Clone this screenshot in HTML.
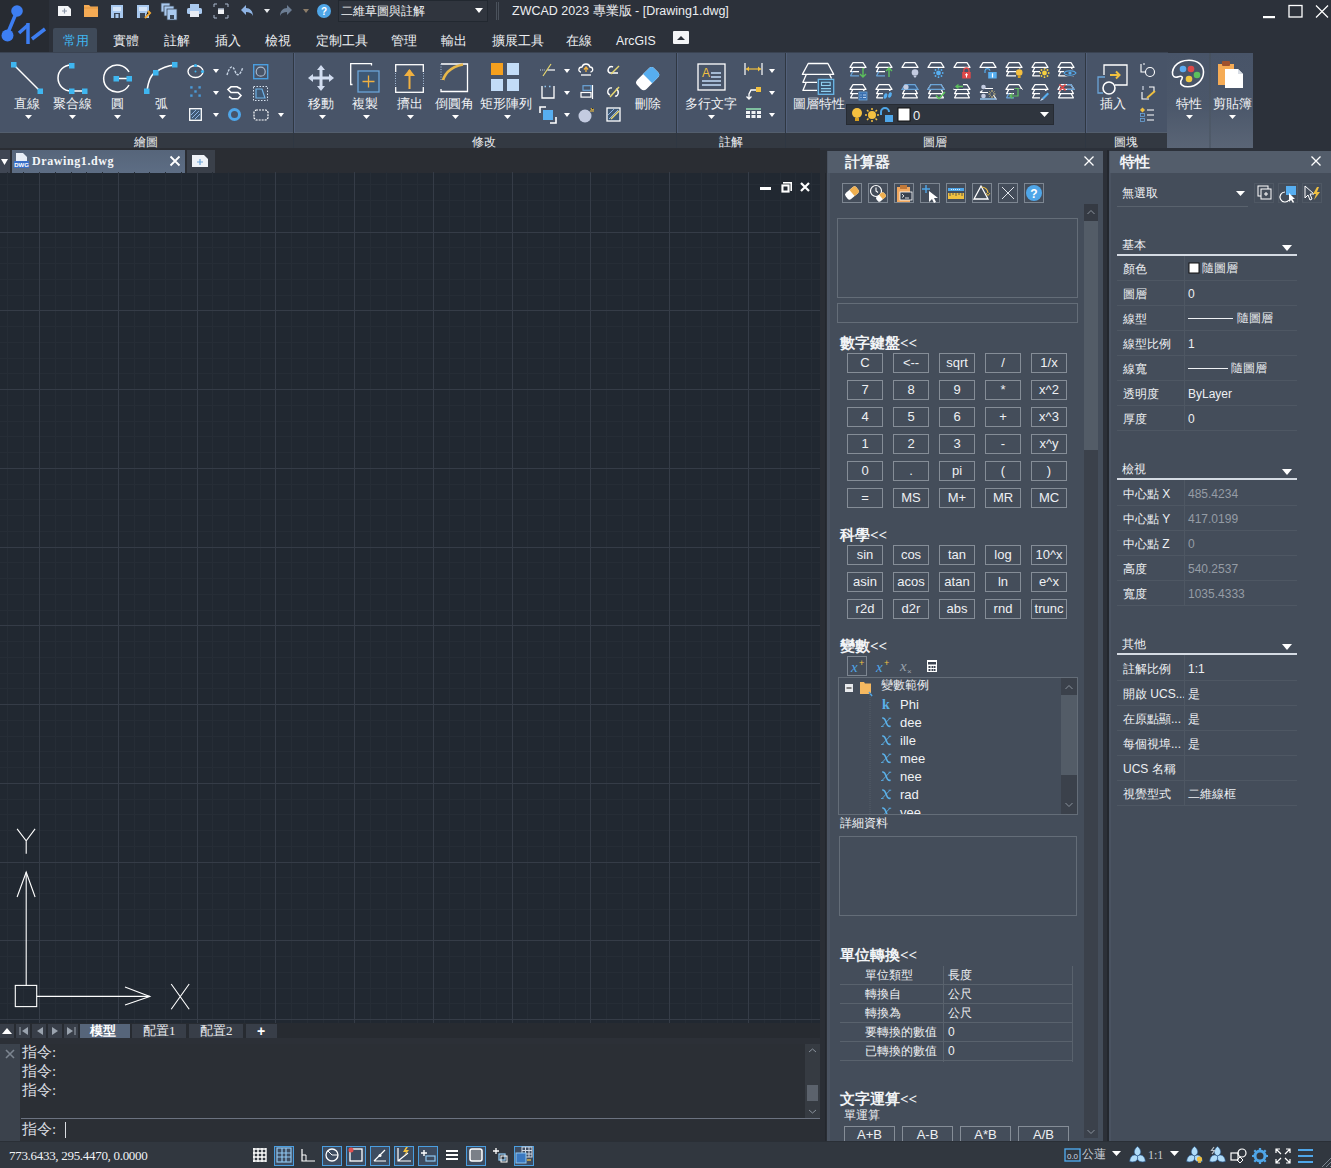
<!DOCTYPE html><html><head><meta charset="utf-8"><style>
html,body{margin:0;padding:0;}
body{width:1331px;height:1168px;position:relative;overflow:hidden;background:#2c313a;font-family:"Liberation Sans",sans-serif;}
.t{position:absolute;white-space:nowrap;line-height:1;font-weight:500;}
.b{position:absolute;box-sizing:border-box;}
.s{position:absolute;overflow:visible;}
</style></head><body>
<div class="b" style="left:0px;top:0px;width:1331px;height:53px;background:#2c313a;"></div>
<div class="b" style="left:0px;top:0px;width:49px;height:53px;background:#272b32;"></div>
<svg class="s" style="left:0px;top:0px;" width="49" height="50" viewBox="0 0 49 50"><line x1="17" y1="11" x2="7" y2="35" stroke="#3d7ef2" stroke-width="3.5"/><circle cx="17" cy="11" r="5.8" fill="#3d7ef2"/><circle cx="7.5" cy="35.5" r="6" fill="#3d7ef2"/><path d="M19 33 L28 25" stroke="#3d7ef2" stroke-width="3.5"/><path d="M28 23 L28 44" stroke="#3d7ef2" stroke-width="3.5"/><path d="M32 39 L45 29" stroke="#3d7ef2" stroke-width="3.5"/></svg>
<svg class="s" style="left:57px;top:5px;" width="15" height="12" viewBox="0 0 15 12"><path d="M1 1H11L14 4V11H1Z" fill="#f4f6f8"/><path d="M5 6H10M7.5 3.5V8.5" stroke="#8a96a8" stroke-width="1.2"/></svg>
<svg class="s" style="left:84px;top:5px;" width="14" height="12" viewBox="0 0 14 12"><path d="M0 0H5L6.5 1.5H14V12H0Z" fill="#f5ab55"/><path d="M0 3H14" stroke="#d98a30" stroke-width="0.6"/></svg>
<svg class="s" style="left:111px;top:5px;" width="12" height="13" viewBox="0 0 12 13"><rect x="0" y="0" width="12" height="13" fill="#a9c9ef"/><rect x="2" y="2" width="8" height="4" fill="#d7e6f8"/><rect x="3" y="8" width="6" height="5" fill="#3a4656"/><rect x="4.5" y="9" width="3" height="4" fill="#a9c9ef"/></svg>
<svg class="s" style="left:137px;top:5px;" width="13" height="13" viewBox="0 0 13 13"><rect x="0" y="0" width="12" height="13" fill="#a9c9ef"/><rect x="2" y="2" width="8" height="4" fill="#d7e6f8"/><rect x="3" y="8" width="5" height="5" fill="#3a4656"/><path d="M8 13L13 8L11 6" stroke="#f0a835" stroke-width="2"/></svg>
<svg class="s" style="left:161px;top:3px;" width="17" height="17" viewBox="0 0 17 17"><rect x="0" y="0" width="9" height="9" fill="#a9c9ef" stroke="#3a4656" stroke-width="0.8"/><rect x="3" y="3" width="10" height="10" fill="#a9c9ef" stroke="#3a4656" stroke-width="0.8"/><rect x="6" y="6" width="10" height="11" fill="#a9c9ef" stroke="#3a4656" stroke-width="0.8"/><rect x="9" y="12" width="4" height="4" fill="#3a4656"/></svg>
<svg class="s" style="left:187px;top:4px;" width="15" height="13" viewBox="0 0 15 13"><rect x="3" y="0" width="9" height="4" fill="#a9c9ef"/><rect x="0" y="4" width="15" height="6" rx="1.5" fill="#a9c9ef"/><rect x="3" y="7" width="9" height="6" fill="#e8ecf4"/></svg>
<svg class="s" style="left:214px;top:4px;" width="14" height="14" viewBox="0 0 14 14"><path d="M0 3V0H3M11 0H14V3M14 11V14H11M3 14H0V11" stroke="#a9b8cc" stroke-width="1" fill="none"/><rect x="4" y="4" width="6" height="6" fill="#f0f2f5"/><rect x="4" y="4" width="6" height="1.5" fill="#8a96a8"/></svg>
<svg class="s" style="left:240px;top:4px;" width="14" height="13" viewBox="0 0 14 13"><path d="M6 1L1 6L6 11V8C9 8 12 9 13 12C13 7 10 4 6 4Z" fill="#8fb4e4"/></svg>
<svg class="s" style="left:263.5px;top:9.0px;" width="6" height="4" viewBox="0 0 6 4"><path d="M0 0H6L3.0 4Z" fill="#e8eaed"/></svg>
<svg class="s" style="left:279px;top:4px;" width="14" height="13" viewBox="0 0 14 13"><path d="M8 1L13 6L8 11V8C5 8 2 9 1 12C1 7 4 4 8 4Z" fill="#6c7d93"/></svg>
<svg class="s" style="left:302.5px;top:9.0px;" width="6" height="4" viewBox="0 0 6 4"><path d="M0 0H6L3.0 4Z" fill="#8d7d6a"/></svg>
<svg class="s" style="left:317px;top:4px;" width="14" height="14" viewBox="0 0 14 14"><circle cx="7" cy="7" r="7" fill="#4fa6e8"/><text x="7" y="11" font-size="10" text-anchor="middle" fill="#fff" font-family="Liberation Sans" font-weight="bold">?</text></svg>
<div class="b" style="left:338px;top:0px;width:150px;height:22px;background:#30353e;border:1px solid #222830;"></div>
<div class="t" style="left:341px;top:5px;font-size:12px;color:#f2f3f5;">二維草圖與註解</div>
<svg class="s" style="left:474.5px;top:8.0px;" width="8" height="5" viewBox="0 0 8 5"><path d="M0 0H8L4.0 5Z" fill="#ffffff"/></svg>
<div class="b" style="left:496px;top:2px;width:1px;height:18px;background:#4b525c;"></div>
<div class="b" style="left:498px;top:2px;width:1px;height:18px;background:#4b525c;"></div>
<div class="t" style="left:512px;top:5px;font-size:12.5px;color:#eceef1;">ZWCAD 2023 專業版 - [Drawing1.dwg]</div>
<svg class="s" style="left:1262px;top:4px;" width="68" height="16" viewBox="0 0 68 16"><rect x="1" y="12" width="12" height="2.2" fill="#fff"/><rect x="27" y="1.5" width="13" height="11.5" stroke="#fff" stroke-width="1.3" fill="none"/><path d="M54 1.5L66 13.5M66 1.5L54 13.5" stroke="#fff" stroke-width="1.2"/></svg>
<div class="b" style="left:53px;top:28px;width:44px;height:24px;background:#3f4a59;border-radius:2px 2px 0 0;"></div>
<div class="t" style="left:616px;top:35px;font-size:12.3px;color:#eef0f3;">ArcGIS</div>
<div class="t" style="left:63px;top:34px;font-size:13px;color:#3fb6f0;">常用</div>
<div class="t" style="left:113px;top:34px;font-size:13px;color:#eef0f3;">實體</div>
<div class="t" style="left:164px;top:34px;font-size:13px;color:#eef0f3;">註解</div>
<div class="t" style="left:215px;top:34px;font-size:13px;color:#eef0f3;">插入</div>
<div class="t" style="left:265px;top:34px;font-size:13px;color:#eef0f3;">檢視</div>
<div class="t" style="left:316px;top:34px;font-size:13px;color:#eef0f3;">定制工具</div>
<div class="t" style="left:391px;top:34px;font-size:13px;color:#eef0f3;">管理</div>
<div class="t" style="left:441px;top:34px;font-size:13px;color:#eef0f3;">輸出</div>
<div class="t" style="left:492px;top:34px;font-size:13px;color:#eef0f3;">擴展工具</div>
<div class="t" style="left:566px;top:34px;font-size:13px;color:#eef0f3;">在線</div>
<svg class="s" style="left:673px;top:31px;" width="16" height="13" viewBox="0 0 16 13"><rect x="0" y="0" width="16" height="13" rx="1" fill="#f4f5f7"/><path d="M4 9L8 5L12 9Z" fill="#2c313a"/></svg>
<div class="b" style="left:0px;top:53px;width:1168px;height:80px;background:#485468;"></div>
<div class="b" style="left:0px;top:52px;width:1168px;height:1px;background:#3a4352;"></div>
<div class="b" style="left:0px;top:133px;width:1168px;height:15px;background:#333942;"></div>
<div class="b" style="left:0px;top:132px;width:1168px;height:1px;background:#535e6d;"></div>
<div class="b" style="left:293px;top:53px;width:1px;height:95px;background:#2f3742;"></div>
<div class="b" style="left:294px;top:53px;width:1px;height:80px;background:#52607a;"></div>
<div class="b" style="left:676px;top:53px;width:1px;height:95px;background:#2f3742;"></div>
<div class="b" style="left:677px;top:53px;width:1px;height:80px;background:#52607a;"></div>
<div class="b" style="left:785px;top:53px;width:1px;height:95px;background:#2f3742;"></div>
<div class="b" style="left:786px;top:53px;width:1px;height:80px;background:#52607a;"></div>
<div class="b" style="left:1085px;top:53px;width:1px;height:95px;background:#2f3742;"></div>
<div class="b" style="left:1086px;top:53px;width:1px;height:80px;background:#52607a;"></div>
<div class="b" style="left:1167px;top:53px;width:86px;height:95px;background:linear-gradient(180deg,#485468 0%,#4b576a 55%,#5a6576 100%);"></div>
<div class="b" style="left:1209px;top:53px;width:2px;height:95px;background:linear-gradient(#46515f,#505b6a);"></div>
<div class="t" style="left:46px;width:200px;text-align:center;top:136px;font-size:12px;color:#eef0f3;">繪圖</div>
<div class="t" style="left:384px;width:200px;text-align:center;top:136px;font-size:12px;color:#eef0f3;">修改</div>
<div class="t" style="left:631px;width:200px;text-align:center;top:136px;font-size:12px;color:#eef0f3;">註解</div>
<div class="t" style="left:835px;width:200px;text-align:center;top:136px;font-size:12px;color:#eef0f3;">圖層</div>
<div class="t" style="left:1026px;width:200px;text-align:center;top:136px;font-size:12px;color:#eef0f3;">圖塊</div>
<div class="t" style="left:-73px;width:200px;text-align:center;top:97px;font-size:13px;color:#f0f2f5;">直線</div>
<div class="t" style="left:-28px;width:200px;text-align:center;top:97px;font-size:13px;color:#f0f2f5;">聚合線</div>
<div class="t" style="left:17px;width:200px;text-align:center;top:97px;font-size:13px;color:#f0f2f5;">圓</div>
<div class="t" style="left:61px;width:200px;text-align:center;top:97px;font-size:13px;color:#f0f2f5;">弧</div>
<div class="t" style="left:221px;width:200px;text-align:center;top:97px;font-size:13px;color:#f0f2f5;">移動</div>
<div class="t" style="left:265px;width:200px;text-align:center;top:97px;font-size:13px;color:#f0f2f5;">複製</div>
<div class="t" style="left:310px;width:200px;text-align:center;top:97px;font-size:13px;color:#f0f2f5;">擠出</div>
<div class="t" style="left:354px;width:200px;text-align:center;top:97px;font-size:13px;color:#f0f2f5;">倒圓角</div>
<div class="t" style="left:406px;width:200px;text-align:center;top:97px;font-size:13px;color:#f0f2f5;">矩形陣列</div>
<div class="t" style="left:548px;width:200px;text-align:center;top:97px;font-size:13px;color:#f0f2f5;">刪除</div>
<div class="t" style="left:611px;width:200px;text-align:center;top:97px;font-size:13px;color:#f0f2f5;">多行文字</div>
<div class="t" style="left:719px;width:200px;text-align:center;top:97px;font-size:13px;color:#f0f2f5;">圖層特性</div>
<div class="t" style="left:1013px;width:200px;text-align:center;top:97px;font-size:13px;color:#f0f2f5;">插入</div>
<div class="t" style="left:1089px;width:200px;text-align:center;top:97px;font-size:13px;color:#f0f2f5;">特性</div>
<div class="t" style="left:1132px;width:200px;text-align:center;top:97px;font-size:13px;color:#f0f2f5;">剪貼簿</div>
<svg class="s" style="left:24.5px;top:115.0px;" width="7" height="4" viewBox="0 0 7 4"><path d="M0 0H7L3.5 4Z" fill="#ffffff"/></svg>
<svg class="s" style="left:68.5px;top:115.0px;" width="7" height="4" viewBox="0 0 7 4"><path d="M0 0H7L3.5 4Z" fill="#ffffff"/></svg>
<svg class="s" style="left:113.5px;top:115.0px;" width="7" height="4" viewBox="0 0 7 4"><path d="M0 0H7L3.5 4Z" fill="#ffffff"/></svg>
<svg class="s" style="left:158.5px;top:115.0px;" width="7" height="4" viewBox="0 0 7 4"><path d="M0 0H7L3.5 4Z" fill="#ffffff"/></svg>
<svg class="s" style="left:318.5px;top:115.0px;" width="7" height="4" viewBox="0 0 7 4"><path d="M0 0H7L3.5 4Z" fill="#ffffff"/></svg>
<svg class="s" style="left:362.5px;top:115.0px;" width="7" height="4" viewBox="0 0 7 4"><path d="M0 0H7L3.5 4Z" fill="#ffffff"/></svg>
<svg class="s" style="left:406.5px;top:115.0px;" width="7" height="4" viewBox="0 0 7 4"><path d="M0 0H7L3.5 4Z" fill="#ffffff"/></svg>
<svg class="s" style="left:451.5px;top:115.0px;" width="7" height="4" viewBox="0 0 7 4"><path d="M0 0H7L3.5 4Z" fill="#ffffff"/></svg>
<svg class="s" style="left:503.5px;top:115.0px;" width="7" height="4" viewBox="0 0 7 4"><path d="M0 0H7L3.5 4Z" fill="#ffffff"/></svg>
<svg class="s" style="left:707.5px;top:115.0px;" width="7" height="4" viewBox="0 0 7 4"><path d="M0 0H7L3.5 4Z" fill="#ffffff"/></svg>
<svg class="s" style="left:1185.5px;top:115.0px;" width="7" height="4" viewBox="0 0 7 4"><path d="M0 0H7L3.5 4Z" fill="#ffffff"/></svg>
<svg class="s" style="left:1228.5px;top:115.0px;" width="7" height="4" viewBox="0 0 7 4"><path d="M0 0H7L3.5 4Z" fill="#ffffff"/></svg>
<svg class="s" style="left:8px;top:58px;" width="38" height="38" viewBox="0 0 38 38"><line x1="6" y1="7" x2="32" y2="33" stroke="#fff" stroke-width="1.5"/><rect x="3" y="4" width="5.5" height="5.5" fill="#3fb6f0"/><rect x="29.5" y="30.5" width="5.5" height="5.5" fill="#3fb6f0"/></svg>
<svg class="s" style="left:54px;top:57.5px;" width="38" height="38" viewBox="0 0 38 38"><path d="M17 7 A13 13 0 0 0 17 33 H30" stroke="#fff" stroke-width="1.5" fill="none"/><rect x="15" y="5" width="5.5" height="5.5" fill="#3fb6f0"/><rect x="15" y="30.5" width="5.5" height="5.5" fill="#3fb6f0"/><rect x="28" y="30.5" width="5.5" height="5.5" fill="#3fb6f0"/></svg>
<svg class="s" style="left:97.5px;top:57.5px;" width="38" height="38" viewBox="0 0 38 38"><path d="M31 14 A13.5 13.5 0 1 0 31 27" stroke="#fff" stroke-width="1.5" fill="none"/><line x1="18" y1="20.5" x2="31" y2="20.5" stroke="#fff" stroke-width="1.5"/><rect x="15.5" y="18" width="5.5" height="5.5" fill="#3fb6f0"/><rect x="28.5" y="18" width="5.5" height="5.5" fill="#3fb6f0"/></svg>
<svg class="s" style="left:142px;top:59px;" width="38" height="38" viewBox="0 0 38 38"><path d="M5 32 Q7 16 14 13 Q22 7 33 6" stroke="#fff" stroke-width="1.5" fill="none"/><rect x="2" y="29.5" width="5.5" height="5.5" fill="#3fb6f0"/><rect x="11" y="11" width="5.5" height="5.5" fill="#3fb6f0"/><rect x="30" y="3" width="5.5" height="5.5" fill="#3fb6f0"/></svg>
<svg class="s" style="left:187px;top:64px;" width="18" height="16" viewBox="0 0 18 16"><ellipse cx="8.5" cy="7.5" rx="7.5" ry="6" stroke="#fff" stroke-width="1.4" fill="none"/><circle cx="8.5" cy="1.5" r="1.6" fill="#3fb6f0"/><circle cx="15.5" cy="7.5" r="1.6" fill="#3fb6f0"/><circle cx="8.5" cy="7.5" r="1" fill="#3fb6f0"/></svg>
<svg class="s" style="left:212.5px;top:69.0px;" width="6" height="4" viewBox="0 0 6 4"><path d="M0 0H6L3.0 4Z" fill="#ffffff"/></svg>
<svg class="s" style="left:226px;top:64px;" width="18" height="14" viewBox="0 0 18 14"><path d="M1 11 C4 1 7 1 9 7 C11 13 14 12 17 3" stroke="#c9d6e6" stroke-width="1.4" fill="none" stroke-dasharray="2.5 1.2"/></svg>
<svg class="s" style="left:253px;top:64px;" width="16" height="16" viewBox="0 0 16 16"><rect x="0.7" y="0.7" width="14" height="14" stroke="#4a9ee0" stroke-width="1.4" fill="none"/><circle cx="7.7" cy="7.7" r="4.5" stroke="#a9b8cc" stroke-width="1.2" fill="none"/></svg>
<svg class="s" style="left:190px;top:86px;" width="11" height="11" viewBox="0 0 11 11"><g fill="#4a9ad8"><rect x="0.2" y="0.2" width="2.4" height="2.4"/><rect x="8.4" y="0.2" width="2.4" height="2.4"/><rect x="4.3" y="4.3" width="2.4" height="2.4"/><rect x="0.2" y="8.4" width="2.4" height="2.4"/><rect x="8.4" y="8.4" width="2.4" height="2.4"/></g></svg>
<svg class="s" style="left:212.5px;top:91.0px;" width="6" height="4" viewBox="0 0 6 4"><path d="M0 0H6L3.0 4Z" fill="#ffffff"/></svg>
<svg class="s" style="left:227px;top:86px;" width="16" height="14" viewBox="0 0 16 14"><path d="M14 3 L10 0.8 H4 L1 3.5 L4 6.5 H11 L14 9.5 L11 12.8 H5 L2 10.5" stroke="#fff" stroke-width="1.6" fill="none"/></svg>
<svg class="s" style="left:253px;top:86px;" width="16" height="15" viewBox="0 0 16 15"><rect x="0.5" y="0.5" width="14" height="14" stroke="#d7e3f0" stroke-width="1" stroke-dasharray="1.5 1.5" fill="none"/><path d="M3 3H9L12 12H3Z" stroke="#6fb3e8" stroke-width="1.2" fill="#3e5874"/></svg>
<svg class="s" style="left:189px;top:108px;" width="13" height="13" viewBox="0 0 13 13"><rect x="0.7" y="0.7" width="11.6" height="11.6" stroke="#fff" stroke-width="1.3" fill="#3e5874"/><path d="M3 10L10 3M6 11L11 6M2 7L7 2" stroke="#8fb4e4" stroke-width="1"/></svg>
<svg class="s" style="left:212.5px;top:113.0px;" width="6" height="4" viewBox="0 0 6 4"><path d="M0 0H6L3.0 4Z" fill="#ffffff"/></svg>
<svg class="s" style="left:228px;top:108px;" width="13" height="13" viewBox="0 0 13 13"><circle cx="6.5" cy="6.5" r="5" stroke="#4fa6e8" stroke-width="3" fill="none"/></svg>
<svg class="s" style="left:253px;top:109px;" width="16" height="12" viewBox="0 0 16 12"><path d="M3 1H13L15 3V9L13 11H3L1 9V3Z" stroke="#fff" stroke-width="1.2" fill="none" stroke-dasharray="2 1"/></svg>
<svg class="s" style="left:278.0px;top:113.0px;" width="6" height="4" viewBox="0 0 6 4"><path d="M0 0H6L3.0 4Z" fill="#ffffff"/></svg>
<svg class="s" style="left:307px;top:64px;" width="28" height="28" viewBox="0 0 28 28"><path d="M14 1L18 6H15.5V12.5H22V10L27 14L22 18V15.5H15.5V22H18L14 27L10 22H12.5V15.5H6V18L1 14L6 10V12.5H12.5V6H10Z" fill="#d2ddf0"/></svg>
<svg class="s" style="left:350px;top:63px;" width="30" height="30" viewBox="0 0 30 30"><path d="M21.5 2.5V0.7H0.7V21.5H2.5" stroke="#fff" stroke-width="1.3" fill="none"/><rect x="8" y="8" width="21" height="21" stroke="#6aa4d8" stroke-width="1.3" fill="#3e5874"/><path d="M18.5 12.5V24.5M12.5 18.5H24.5" stroke="#f0b040" stroke-width="1.3"/></svg>
<svg class="s" style="left:395px;top:64px;" width="29" height="29" viewBox="0 0 29 29"><rect x="0.7" y="0.7" width="27.6" height="27.6" stroke="#fff" stroke-width="1.3" fill="none"/><path d="M14.5 6V25" stroke="#f0b040" stroke-width="2"/><path d="M9 12L14.5 5L20 12Z" fill="#f0b040"/></svg>
<div class="b" style="left:394px;top:72px;width:3px;height:15px;background:#485468;"></div>
<div class="b" style="left:422px;top:72px;width:3px;height:15px;background:#485468;"></div>
<svg class="s" style="left:394px;top:72px;" width="31" height="15" viewBox="0 0 31 15"><path d="M1.5 1V14M29.5 1V14" stroke="#a9c0dc" stroke-width="1" stroke-dasharray="1 1.5"/></svg>
<svg class="s" style="left:439px;top:63px;" width="30" height="30" viewBox="0 0 30 30"><path d="M2 1H28.5V28.5H2V26" stroke="#fff" stroke-width="1.3" fill="none"/><path d="M2 1V22" stroke="#a9c0dc" stroke-width="1" stroke-dasharray="1 1.5"/><path d="M2.5 23 Q5 5 24 1.5" stroke="#e8b84a" stroke-width="2.6" fill="none"/></svg>
<div class="b" style="left:440px;top:80px;width:4px;height:8px;background:#485468;"></div>
<svg class="s" style="left:491px;top:63px;" width="30" height="30" viewBox="0 0 30 30"><rect x="0" y="0" width="12" height="12" fill="#f5a01e"/><rect x="16" y="0" width="12" height="12" fill="#c3dcf7"/><rect x="0" y="16" width="12" height="12" fill="#c3dcf7"/><rect x="16" y="16" width="12" height="12" fill="#c3dcf7"/></svg>
<svg class="s" style="left:539px;top:63px;" width="22" height="14" viewBox="0 0 22 14"><path d="M1 7H6M8 7H9" stroke="#c9d6e6" stroke-width="1" stroke-dasharray="1 1.2"/><path d="M9 7H16" stroke="#fff" stroke-width="1.2"/><path d="M4 13L12 1" stroke="#e8d870" stroke-width="1.2"/></svg>
<svg class="s" style="left:564.0px;top:69.0px;" width="6" height="4" viewBox="0 0 6 4"><path d="M0 0H6L3.0 4Z" fill="#ffffff"/></svg>
<svg class="s" style="left:541px;top:85px;" width="14" height="14" viewBox="0 0 14 14"><path d="M1 1V13H13V1" stroke="#fff" stroke-width="1.3" fill="none"/><path d="M3.5 1.5H5M8 1.5H9.5" stroke="#8fc6f0" stroke-width="1.4"/></svg>
<svg class="s" style="left:564.0px;top:91.0px;" width="6" height="4" viewBox="0 0 6 4"><path d="M0 0H6L3.0 4Z" fill="#ffffff"/></svg>
<svg class="s" style="left:539px;top:106px;" width="18" height="18" viewBox="0 0 18 18"><path d="M1 7V1H7M11 17H17V11" stroke="#fff" stroke-width="1.6" fill="none"/><rect x="4" y="4" width="10" height="10" fill="#57aef0"/></svg>
<svg class="s" style="left:564.0px;top:113.0px;" width="6" height="4" viewBox="0 0 6 4"><path d="M0 0H6L3.0 4Z" fill="#ffffff"/></svg>
<svg class="s" style="left:578px;top:63px;" width="16" height="15" viewBox="0 0 16 15"><path d="M3 9C0 9 0 4 4 4C5 0 11 0 12 4C15.5 4 15.5 9 12.5 9" stroke="#fff" stroke-width="1.3" fill="none"/><path d="M3 12H13" stroke="#fff" stroke-width="1.3"/><path d="M8 4V9M6 6.5L8 4L10 6.5" stroke="#f0b040" stroke-width="1.3" fill="none"/></svg>
<svg class="s" style="left:580px;top:85px;" width="13" height="14" viewBox="0 0 13 14"><rect x="3" y="0.7" width="8" height="4.6" stroke="#6aa4d8" stroke-width="1.2" fill="none"/><rect x="1" y="7.5" width="10" height="4.6" stroke="#fff" stroke-width="1.2" fill="none"/><path d="M12.5 0V14" stroke="#fff" stroke-width="1.2"/></svg>
<svg class="s" style="left:578px;top:107px;" width="17" height="15" viewBox="0 0 17 15"><circle cx="7" cy="9" r="6.5" fill="#c3cbe0"/><path d="M13 1L14 3L16 2M12 4H16" stroke="#f0c040" stroke-width="1"/></svg>
<svg class="s" style="left:606px;top:64px;" width="16" height="14" viewBox="0 0 16 14"><path d="M7 3C3 1 0 7 4 9H12" stroke="#fff" stroke-width="1.4" fill="none"/><path d="M5 10L13 2" stroke="#e8d870" stroke-width="1.5"/></svg>
<svg class="s" style="left:606px;top:85px;" width="16" height="14" viewBox="0 0 16 14"><path d="M6 3C2 2 0 8 4 10" stroke="#fff" stroke-width="1.4" fill="none"/><path d="M10 4C14 6 12 12 9 11" stroke="#fff" stroke-width="1.4" fill="none"/><path d="M4 12L13 2" stroke="#e8d870" stroke-width="1.5"/></svg>
<svg class="s" style="left:606px;top:107px;" width="15" height="15" viewBox="0 0 15 15"><rect x="1" y="1" width="13" height="13" stroke="#fff" stroke-width="1.3" fill="#3e5874"/><path d="M3 12L12 3M2 8L8 2" stroke="#8fb4e4" stroke-width="1"/><path d="M5 12L13 4" stroke="#e8d870" stroke-width="1.5"/></svg>
<svg class="s" style="left:633px;top:64px;" width="30" height="29" viewBox="0 0 30 29"><g transform="rotate(-45 15 15)"><rect x="3" y="8" width="24" height="13" rx="4" fill="#fff"/><path d="M15 8H23A4 4 0 0 1 27 12V17A4 4 0 0 1 23 21H15Z" fill="#57aef0"/></g></svg>
<svg class="s" style="left:697px;top:63px;" width="29" height="28" viewBox="0 0 29 28"><rect x="1" y="1" width="27" height="26" stroke="#fff" stroke-width="1.3" fill="none"/><text x="5" y="14" font-size="12" fill="#f0c040" font-family="Liberation Sans">A</text><path d="M14 10H24M14 14H24M5 18H24M5 22H24" stroke="#c3dcf7" stroke-width="1.6"/></svg>
<svg class="s" style="left:744px;top:63px;" width="19" height="13" viewBox="0 0 19 13"><path d="M1 0V12M18 0V12" stroke="#fff" stroke-width="1.2"/><path d="M2 6H17" stroke="#f0c040" stroke-width="1.2"/><path d="M2 6L5 3.5V8.5ZM17 6L14 3.5V8.5Z" fill="#f0c040"/></svg>
<svg class="s" style="left:769.0px;top:69.0px;" width="6" height="4" viewBox="0 0 6 4"><path d="M0 0H6L3.0 4Z" fill="#ffffff"/></svg>
<svg class="s" style="left:744px;top:86px;" width="19" height="14" viewBox="0 0 19 14"><rect x="12" y="1" width="5" height="5" fill="#f0c040"/><path d="M12 4H7L5 8V13M2.5 10.5L5 13L7.5 10.5" stroke="#fff" stroke-width="1.3" fill="none"/></svg>
<svg class="s" style="left:769.0px;top:91.0px;" width="6" height="4" viewBox="0 0 6 4"><path d="M0 0H6L3.0 4Z" fill="#ffffff"/></svg>
<svg class="s" style="left:745px;top:108px;" width="17" height="13" viewBox="0 0 17 13"><rect x="1" y="0" width="15" height="2" fill="#7fc0a0"/><g fill="#f0f2f5"><rect x="1" y="3" width="4" height="3"/><rect x="6.5" y="3" width="4" height="3"/><rect x="12" y="3" width="4" height="3"/><rect x="1" y="7" width="4" height="3"/><rect x="6.5" y="7" width="4" height="3"/><rect x="12" y="7" width="4" height="3"/></g></svg>
<svg class="s" style="left:769.0px;top:113.0px;" width="6" height="4" viewBox="0 0 6 4"><path d="M0 0H6L3.0 4Z" fill="#ffffff"/></svg>
<svg class="s" style="left:795px;top:58px;" width="45" height="40" viewBox="0 0 45 40"><g stroke="#fff" stroke-width="1.3" fill="none" stroke-linejoin="round"><path d="M13.2 5.5H32.9L38.7 16.4H7.4Z"/><path d="M11.3 16.4L7.9 24.3H22"/><path d="M11.3 24.3L7.9 32.4H22"/><path d="M34.5 16.4L36.5 20.5"/></g><rect x="23.3" y="21.4" width="15.4" height="14.9" stroke="#6ab8e8" stroke-width="1.3" fill="#3a5470"/><rect x="26.5" y="24.3" width="8.7" height="3.2" stroke="#8fd0f0" stroke-width="1.1" fill="none"/><path d="M26 30.6H36M26 33.4H36" stroke="#8fd0f0" stroke-width="1.1"/></svg>
<svg class="s" style="left:850px;top:62px;" width="18" height="18" viewBox="0 0 18 18"><path d="M3 0.6H13L16 5.4H0L3 0.6Z" stroke="#fff" stroke-width="1.2" fill="none" stroke-linejoin="round"/><path d="M2.8 5.4L0.6 9.6H15.4L13.2 5.4" stroke="#fff" stroke-width="1.2" fill="none" stroke-linejoin="round"/><path d="M2.8 9.6L0.6 13.8H15.4L13.2 9.6" stroke="#6aa4d8" stroke-width="1.2" fill="none" stroke-linejoin="round"/><rect x="9" y="6.5" width="8" height="9" fill="#485468"/><path d="M13 6V15M10 12L13 15L16 12" stroke="#5cc05c" stroke-width="1.4" fill="none"/></svg>
<svg class="s" style="left:876px;top:62px;" width="18" height="18" viewBox="0 0 18 18"><path d="M3 0.6H13L16 5.4H0L3 0.6Z" stroke="#fff" stroke-width="1.2" fill="none" stroke-linejoin="round"/><path d="M2.8 5.4L0.6 9.6H15.4L13.2 5.4" stroke="#fff" stroke-width="1.2" fill="none" stroke-linejoin="round"/><path d="M2.8 9.6L0.6 13.8H15.4L13.2 9.6" stroke="#6aa4d8" stroke-width="1.2" fill="none" stroke-linejoin="round"/><rect x="9" y="6.5" width="8" height="9" fill="#485468"/><path d="M13 15V6M10 9L13 6L16 9" stroke="#5cc05c" stroke-width="1.4" fill="none"/></svg>
<svg class="s" style="left:902px;top:62px;" width="18" height="18" viewBox="0 0 18 18"><path d="M3 0.6H13L16 5.4H0L3 0.6Z" stroke="#fff" stroke-width="1.2" fill="none" stroke-linejoin="round"/><circle cx="13" cy="10.5" r="3.3" fill="#c3cbe0"/><path d="M11.3 14H14.7L13 16Z" fill="#c3cbe0"/></svg>
<svg class="s" style="left:928px;top:62px;" width="18" height="18" viewBox="0 0 18 18"><path d="M3 0.6H13L16 5.4H0L3 0.6Z" stroke="#fff" stroke-width="1.2" fill="none" stroke-linejoin="round"/><circle cx="10.5" cy="11" r="2.4" fill="#57aef0"/><g fill="#57aef0"><circle cx="10.5" cy="6.8" r="0.9"/><circle cx="10.5" cy="15.2" r="0.9"/><circle cx="6.3" cy="11" r="0.9"/><circle cx="14.7" cy="11" r="0.9"/><circle cx="7.5" cy="8" r="0.9"/><circle cx="13.5" cy="14" r="0.9"/><circle cx="7.5" cy="14" r="0.9"/><circle cx="13.5" cy="8" r="0.9"/></g></svg>
<svg class="s" style="left:954px;top:62px;" width="18" height="18" viewBox="0 0 18 18"><path d="M3 0.6H13L16 5.4H0L3 0.6Z" stroke="#fff" stroke-width="1.2" fill="none" stroke-linejoin="round"/><path d="M9.8 10V8.6A2.6 2.6 0 0 1 15 8.6V10" stroke="#e04848" stroke-width="1.3" fill="none"/><rect x="8.2" y="10" width="8.5" height="6.5" fill="#e04848"/><path d="M12.5 11.3V15.5M11 12.8H14" stroke="#fff" stroke-width="1"/></svg>
<svg class="s" style="left:980px;top:62px;" width="18" height="18" viewBox="0 0 18 18"><path d="M3 0.6H13L16 5.4H0L3 0.6Z" stroke="#fff" stroke-width="1.2" fill="none" stroke-linejoin="round"/><path d="M5 11V8.6A2.6 2.6 0 0 1 10 8.6" stroke="#57aef0" stroke-width="1.2" fill="none"/><rect x="8.2" y="10" width="8.5" height="6.5" fill="#57aef0"/><path d="M12.5 11.3V15.5" stroke="#fff" stroke-width="1.2"/></svg>
<svg class="s" style="left:1006px;top:62px;" width="18" height="18" viewBox="0 0 18 18"><path d="M3 0.6H13L16 5.4H0L3 0.6Z" stroke="#fff" stroke-width="1.2" fill="none" stroke-linejoin="round"/><path d="M2.8 5.4L0.6 9.6H15.4L13.2 5.4" stroke="#fff" stroke-width="1.2" fill="none" stroke-linejoin="round"/><path d="M2.8 9.6L0.6 13.8H15.4L13.2 9.6" stroke="#fff" stroke-width="1.2" fill="none" stroke-linejoin="round"/><rect x="10" y="6.5" width="7" height="10" fill="#485468"/><circle cx="13.2" cy="10.5" r="3.3" fill="#f5c040"/><rect x="11.8" y="13.5" width="2.8" height="2.5" fill="#d8a020"/></svg>
<svg class="s" style="left:1032px;top:62px;" width="18" height="18" viewBox="0 0 18 18"><path d="M3 0.6H13L16 5.4H0L3 0.6Z" stroke="#fff" stroke-width="1.2" fill="none" stroke-linejoin="round"/><path d="M2.8 5.4L0.6 9.6H15.4L13.2 5.4" stroke="#fff" stroke-width="1.2" fill="none" stroke-linejoin="round"/><path d="M2.8 9.6L0.6 13.8H15.4L13.2 9.6" stroke="#fff" stroke-width="1.2" fill="none" stroke-linejoin="round"/><rect x="8" y="6.5" width="9" height="10" fill="#485468"/><circle cx="12.5" cy="11" r="2.4" fill="#f5d040"/><g fill="#f5d040"><circle cx="12.5" cy="6.8" r="0.9"/><circle cx="12.5" cy="15.2" r="0.9"/><circle cx="8.3" cy="11" r="0.9"/><circle cx="16.7" cy="11" r="0.9"/><circle cx="9.5" cy="8" r="0.9"/><circle cx="15.5" cy="14" r="0.9"/><circle cx="9.5" cy="14" r="0.9"/><circle cx="15.5" cy="8" r="0.9"/></g></svg>
<svg class="s" style="left:1058px;top:62px;" width="18" height="18" viewBox="0 0 18 18"><path d="M3 0.6H13L16 5.4H0L3 0.6Z" stroke="#fff" stroke-width="1.2" fill="none" stroke-linejoin="round"/><path d="M2.8 5.4L0.6 9.6H15.4L13.2 5.4" stroke="#fff" stroke-width="1.2" fill="none" stroke-linejoin="round"/><path d="M2.8 9.6L0.6 13.8H15.4L13.2 9.6" stroke="#fff" stroke-width="1.2" fill="none" stroke-linejoin="round"/><ellipse cx="12" cy="11" rx="6.5" ry="4" fill="#485468"/><path d="M6 11C8 8 16 8 18 11C16 14 8 14 6 11Z" stroke="#57aef0" stroke-width="1.1" fill="none"/><circle cx="12" cy="11" r="1.6" fill="#57aef0"/></svg>
<svg class="s" style="left:850px;top:84px;" width="18" height="18" viewBox="0 0 18 18"><path d="M3 0.6H13L16 5.4H0L3 0.6Z" stroke="#fff" stroke-width="1.2" fill="none" stroke-linejoin="round"/><path d="M2.8 5.4L0.6 9.6H15.4L13.2 5.4" stroke="#fff" stroke-width="1.2" fill="none" stroke-linejoin="round"/><path d="M2.8 9.6L0.6 13.8H15.4L13.2 9.6" stroke="#fff" stroke-width="1.2" fill="none" stroke-linejoin="round"/><rect x="8" y="7" width="9" height="9" fill="#485468"/><rect x="9" y="8" width="8" height="8" fill="#3a6fb0" stroke="#6aa4d8" stroke-width="0.8"/><path d="M10.5 11H11.5M13 11H16M10.5 13.5H11.5M13 13.5H16" stroke="#c3dcf7" stroke-width="0.9"/></svg>
<svg class="s" style="left:876px;top:84px;" width="18" height="18" viewBox="0 0 18 18"><path d="M3 0.6H13L16 5.4H0L3 0.6Z" stroke="#fff" stroke-width="1.2" fill="none" stroke-linejoin="round"/><path d="M2.8 5.4L0.6 9.6H15.4L13.2 5.4" stroke="#fff" stroke-width="1.2" fill="none" stroke-linejoin="round"/><path d="M2.8 9.6L0.6 13.8H15.4L13.2 9.6" stroke="#fff" stroke-width="1.2" fill="none" stroke-linejoin="round"/><rect x="7" y="7" width="10" height="9" fill="#485468"/><ellipse cx="9.5" cy="12" rx="1.7" ry="2.8" fill="#57aef0" transform="rotate(20 9.5 12)"/><ellipse cx="14" cy="11" rx="1.7" ry="2.8" fill="#57aef0" transform="rotate(20 14 11)"/></svg>
<svg class="s" style="left:902px;top:84px;" width="18" height="18" viewBox="0 0 18 18"><path d="M2.8 5.4L0.6 9.6H15.4L13.2 5.4" stroke="#fff" stroke-width="1.2" fill="none" stroke-linejoin="round"/><path d="M2.8 9.6L0.6 13.8H15.4L13.2 9.6" stroke="#fff" stroke-width="1.2" fill="none" stroke-linejoin="round"/><path d="M3 0.6H13L16 5.4H0Z" stroke="#6aa4d8" stroke-width="1.2" fill="#3a5a80"/><circle cx="4" cy="3" r="2.6" fill="#c3cbe0"/></svg>
<svg class="s" style="left:928px;top:84px;" width="18" height="18" viewBox="0 0 18 18"><path d="M3 0.6H13L16 5.4H0L3 0.6Z" stroke="#fff" stroke-width="1.2" fill="none" stroke-linejoin="round"/><path d="M2.8 5.4L0.6 9.6H15.4L13.2 5.4" stroke="#fff" stroke-width="1.2" fill="none" stroke-linejoin="round"/><path d="M2.8 9.6L0.6 13.8H15.4L13.2 9.6" stroke="#fff" stroke-width="1.2" fill="none" stroke-linejoin="round"/><path d="M3 0.6H13L16 5.4H0Z" stroke="#6aa4d8" stroke-width="1.2" fill="#485468"/><path d="M8 11.5L11 14.5L17 8" stroke="#5cc05c" stroke-width="1.7" fill="none"/></svg>
<svg class="s" style="left:954px;top:84px;" width="18" height="18" viewBox="0 0 18 18"><path d="M3 0.6H13L16 5.4H0L3 0.6Z" stroke="#fff" stroke-width="1.2" fill="none" stroke-linejoin="round"/><path d="M2.8 5.4L0.6 9.6H15.4L13.2 5.4" stroke="#fff" stroke-width="1.2" fill="none" stroke-linejoin="round"/><path d="M2.8 9.6L0.6 13.8H15.4L13.2 9.6" stroke="#fff" stroke-width="1.2" fill="none" stroke-linejoin="round"/><rect x="0" y="0" width="9" height="5" fill="#485468"/><path d="M9 2.5H2M4.5 0.5L2 2.5L4.5 4.5" stroke="#5cc05c" stroke-width="1.3" fill="none"/></svg>
<svg class="s" style="left:980px;top:84px;" width="18" height="18" viewBox="0 0 18 18"><path d="M5 4.5H13M0 8.5H8M2.5 6.5L0 8.5M0 15H16L13.5 11" stroke="#fff" stroke-width="1.2" fill="none"/><path d="M0 15H16" stroke="#6aa4d8" stroke-width="1.2"/><circle cx="3.5" cy="3" r="2.3" fill="#c3cbe0"/><circle cx="3.5" cy="12" r="2.3" fill="#c3cbe0"/><g stroke="#e8d080" stroke-width="0.9"><path d="M12 6V8M12 12V14M8.5 10H10.5M13.5 10H15.5M9.5 7.5L10.5 8.5M13.5 11.5L14.5 12.5M9.5 12.5L10.5 11.5M13.5 8.5L14.5 7.5"/></g></svg>
<svg class="s" style="left:1006px;top:84px;" width="18" height="18" viewBox="0 0 18 18"><path d="M3 0.6H13L16 5.4H0L3 0.6Z" stroke="#fff" stroke-width="1.2" fill="none" stroke-linejoin="round"/><path d="M2.8 5.4L0.6 9.6H15.4L13.2 5.4" stroke="#fff" stroke-width="1.2" fill="none" stroke-linejoin="round"/><path d="M2.8 9.6L0.6 13.8H15.4L13.2 9.6" stroke="#6aa4d8" stroke-width="1.2" fill="none" stroke-linejoin="round"/><rect x="8" y="5" width="8" height="11" fill="#485468"/><path d="M9 4.5H12V12H4M6.5 9.5L4 12L6.5 14.5" stroke="#5cc05c" stroke-width="1.2" fill="none"/></svg>
<svg class="s" style="left:1032px;top:84px;" width="18" height="18" viewBox="0 0 18 18"><path d="M3 0.6H13L16 5.4H0L3 0.6Z" stroke="#fff" stroke-width="1.2" fill="none" stroke-linejoin="round"/><path d="M2.8 5.4L0.6 9.6H15.4L13.2 5.4" stroke="#fff" stroke-width="1.2" fill="none" stroke-linejoin="round"/><path d="M2.8 9.6L0.6 13.8H15.4L13.2 9.6" stroke="#fff" stroke-width="1.2" fill="none" stroke-linejoin="round"/><rect x="8" y="7" width="10" height="10" fill="#485468"/><path d="M10 14L15.5 8.5L17 10L11.5 15.5Z" fill="#57aef0"/><path d="M8 17L10 14L11.5 15.5Z" fill="#c3dcf7"/></svg>
<svg class="s" style="left:1058px;top:84px;" width="18" height="18" viewBox="0 0 18 18"><path d="M3 0.6H13L16 5.4H0L3 0.6Z" stroke="#fff" stroke-width="1.2" fill="none" stroke-linejoin="round"/><path d="M2.8 5.4L0.6 9.6H15.4L13.2 5.4" stroke="#fff" stroke-width="1.2" fill="none" stroke-linejoin="round"/><path d="M2.8 9.6L0.6 13.8H15.4L13.2 9.6" stroke="#fff" stroke-width="1.2" fill="none" stroke-linejoin="round"/><path d="M9 0.6H13L16 5.4H9" stroke="#6aa4d8" stroke-width="1.2" fill="none"/><path d="M1.5 0.5L7.5 6.5M7.5 0.5L1.5 6.5" stroke="#e04848" stroke-width="1.6"/></svg>
<div class="b" style="left:846px;top:104px;width:208px;height:21px;background:#2f353e;border:1px solid #262b33;"></div>
<svg class="s" style="left:850px;top:107px;" width="60" height="16" viewBox="0 0 60 16"><circle cx="7" cy="6" r="5" fill="#f5c040"/><rect x="5" y="11" width="4" height="3" fill="#d8a020"/><circle cx="22" cy="8" r="4" fill="#f5c040"/><g stroke="#f5c040" stroke-width="1.5"><path d="M22 1V3M22 13V15M15 8H17M27 8H29M17 3L18.5 4.5M25.5 11.5L27 13M17 13L18.5 11.5M25.5 4.5L27 3"/></g><path d="M31 8V5A4 4 0 0 1 39 5" stroke="#4fa6e8" stroke-width="2" fill="none"/><rect x="35" y="8" width="8" height="7" fill="#4fa6e8"/><rect x="48" y="1" width="12" height="13" fill="#fff" stroke="#111" stroke-width="1"/></svg>
<div class="t" style="left:913px;top:109px;font-size:13px;color:#f0f2f5;">0</div>
<svg class="s" style="left:1039.5px;top:112.0px;" width="9" height="5" viewBox="0 0 9 5"><path d="M0 0H9L4.5 5Z" fill="#ffffff"/></svg>
<svg class="s" style="left:1097px;top:64px;" width="32" height="31" viewBox="0 0 32 31"><path d="M7 11V1H30V21H18" stroke="#fff" stroke-width="1.3" fill="none"/><path d="M8 13H1V29H6" stroke="#6aa4d8" stroke-width="1.3" fill="none"/><circle cx="12" cy="24" r="6" stroke="#fff" stroke-width="1.6" fill="none"/><path d="M13 11H22M19 7.5L22.5 11L19 14.5" stroke="#f0c040" stroke-width="2" fill="none"/></svg>
<svg class="s" style="left:1140px;top:63px;" width="16" height="15" viewBox="0 0 16 15"><path d="M1 1V9H5" stroke="#fff" stroke-width="1.1" fill="none"/><path d="M3 1H5" stroke="#fff" stroke-width="1.1"/><circle cx="10" cy="9" r="4.5" stroke="#fff" stroke-width="1.1" fill="none"/></svg>
<svg class="s" style="left:1140px;top:85px;" width="16" height="16" viewBox="0 0 16 16"><path d="M2 7V14H9M14 7V2H9" stroke="#fff" stroke-width="1.1" fill="none"/><path d="M3 1V5" stroke="#d0d8e4" stroke-width="1.2"/><path d="M7 13L15 6" stroke="#f0c040" stroke-width="1.8"/></svg>
<svg class="s" style="left:1140px;top:107px;" width="15" height="15" viewBox="0 0 15 15"><path d="M0 3L2.5 0.5L5 3L2.5 5.5Z" fill="#f0c040"/><rect x="0.5" y="6.5" width="4" height="3" stroke="#6aa4d8" stroke-width="0.8" fill="none"/><rect x="0.5" y="11.5" width="4" height="3" stroke="#6aa4d8" stroke-width="0.8" fill="none"/><path d="M7 3H14M7 8H14M7 13H14" stroke="#fff" stroke-width="1.2"/></svg>
<svg class="s" style="left:1171px;top:59px;" width="35" height="31" viewBox="0 0 35 31"><path d="M18 1.2C27 1.2 32.5 6.5 32.5 13C32.5 21 25.5 27.8 17 27.8C11.5 27.8 9 25 9.8 22.2C10.5 19.8 12.5 19 10.8 17.6C8.5 15.8 6 19.8 3 17.6C0.6 15.8 1 11 3.8 7.2C7 3.3 12 1.2 18 1.2Z" stroke="#fff" stroke-width="1.6" fill="#485468"/><circle cx="12" cy="10" r="3.3" fill="#5aaaf0"/><circle cx="20" cy="10" r="3.3" fill="#e04848"/><circle cx="26" cy="16" r="3.3" fill="#5cc05c"/><circle cx="18" cy="20" r="3.3" fill="#f0c840"/></svg>
<svg class="s" style="left:1217px;top:60px;" width="30" height="30" viewBox="0 0 30 30"><rect x="1" y="4" width="16" height="21" fill="#f5ab55"/><rect x="5" y="1" width="8" height="5" rx="1" fill="#a0522d"/><path d="M8 9H21L26 14V28H8Z" fill="#fff"/><path d="M21 9V14H26" fill="#d8dde5"/></svg>
<div class="b" style="left:0px;top:148px;width:820px;height:25px;background:#2a2d33;"></div>
<div class="b" style="left:0px;top:150px;width:10px;height:23px;background:#3f4653;"></div>
<svg class="s" style="left:1.0px;top:158.5px;" width="7" height="6" viewBox="0 0 7 6"><path d="M0 0H7L3.5 6Z" fill="#ffffff"/></svg>
<div class="b" style="left:12px;top:150px;width:173px;height:23px;background:linear-gradient(#56657a,#5d6d84);"></div>
<svg class="s" style="left:14px;top:153px;" width="16" height="16" viewBox="0 0 16 16"><path d="M2 0H9L13 4V8H2Z" fill="#e8eef6"/><rect x="0" y="8" width="15" height="7" fill="#3a6fc8"/><text x="7.5" y="14" font-size="6" text-anchor="middle" fill="#fff" font-family="Liberation Sans" font-weight="bold">DWG</text></svg>
<div class="t" style="left:32px;top:155px;font-size:12px;color:#f4f6f8;font-family:'Liberation Serif',serif;font-weight:bold;letter-spacing:0.6px;">Drawing1.dwg</div>
<svg class="s" style="left:169px;top:155px;" width="12" height="12" viewBox="0 0 12 12"><path d="M1.5 1.5L10.5 10.5M10.5 1.5L1.5 10.5" stroke="#fff" stroke-width="1.8"/></svg>
<div class="b" style="left:187px;top:150px;width:28px;height:23px;background:#3a404a;"></div>
<svg class="s" style="left:191px;top:154px;" width="18" height="14" viewBox="0 0 18 14"><path d="M1 1H13L17 5V13H1Z" fill="#eef2f7"/><path d="M6 8H12M9 5V11" stroke="#6aa4d8" stroke-width="1.2"/></svg>
<div class="b" style="left:0px;top:173px;width:820px;height:850px;background:#212831;"></div>
<svg class="s" style="left:0px;top:172px;" width="820" height="851" viewBox="0 0 820 851"><rect x="7" y="0" width="1" height="851" fill="#262d36"/><rect x="23" y="0" width="1" height="851" fill="#262d36"/><rect x="55" y="0" width="1" height="851" fill="#262d36"/><rect x="71" y="0" width="1" height="851" fill="#262d36"/><rect x="86" y="0" width="1" height="851" fill="#262d36"/><rect x="102" y="0" width="1" height="851" fill="#262d36"/><rect x="134" y="0" width="1" height="851" fill="#262d36"/><rect x="149" y="0" width="1" height="851" fill="#262d36"/><rect x="165" y="0" width="1" height="851" fill="#262d36"/><rect x="181" y="0" width="1" height="851" fill="#262d36"/><rect x="212" y="0" width="1" height="851" fill="#262d36"/><rect x="228" y="0" width="1" height="851" fill="#262d36"/><rect x="244" y="0" width="1" height="851" fill="#262d36"/><rect x="260" y="0" width="1" height="851" fill="#262d36"/><rect x="291" y="0" width="1" height="851" fill="#262d36"/><rect x="307" y="0" width="1" height="851" fill="#262d36"/><rect x="323" y="0" width="1" height="851" fill="#262d36"/><rect x="338" y="0" width="1" height="851" fill="#262d36"/><rect x="370" y="0" width="1" height="851" fill="#262d36"/><rect x="386" y="0" width="1" height="851" fill="#262d36"/><rect x="401" y="0" width="1" height="851" fill="#262d36"/><rect x="417" y="0" width="1" height="851" fill="#262d36"/><rect x="449" y="0" width="1" height="851" fill="#262d36"/><rect x="464" y="0" width="1" height="851" fill="#262d36"/><rect x="480" y="0" width="1" height="851" fill="#262d36"/><rect x="496" y="0" width="1" height="851" fill="#262d36"/><rect x="527" y="0" width="1" height="851" fill="#262d36"/><rect x="543" y="0" width="1" height="851" fill="#262d36"/><rect x="559" y="0" width="1" height="851" fill="#262d36"/><rect x="575" y="0" width="1" height="851" fill="#262d36"/><rect x="606" y="0" width="1" height="851" fill="#262d36"/><rect x="622" y="0" width="1" height="851" fill="#262d36"/><rect x="638" y="0" width="1" height="851" fill="#262d36"/><rect x="653" y="0" width="1" height="851" fill="#262d36"/><rect x="685" y="0" width="1" height="851" fill="#262d36"/><rect x="701" y="0" width="1" height="851" fill="#262d36"/><rect x="717" y="0" width="1" height="851" fill="#262d36"/><rect x="732" y="0" width="1" height="851" fill="#262d36"/><rect x="764" y="0" width="1" height="851" fill="#262d36"/><rect x="780" y="0" width="1" height="851" fill="#262d36"/><rect x="795" y="0" width="1" height="851" fill="#262d36"/><rect x="811" y="0" width="1" height="851" fill="#262d36"/><rect x="0" y="12" width="820" height="1" fill="#262d36"/><rect x="0" y="28" width="820" height="1" fill="#262d36"/><rect x="0" y="44" width="820" height="1" fill="#262d36"/><rect x="0" y="75" width="820" height="1" fill="#262d36"/><rect x="0" y="91" width="820" height="1" fill="#262d36"/><rect x="0" y="107" width="820" height="1" fill="#262d36"/><rect x="0" y="123" width="820" height="1" fill="#262d36"/><rect x="0" y="154" width="820" height="1" fill="#262d36"/><rect x="0" y="170" width="820" height="1" fill="#262d36"/><rect x="0" y="186" width="820" height="1" fill="#262d36"/><rect x="0" y="201" width="820" height="1" fill="#262d36"/><rect x="0" y="233" width="820" height="1" fill="#262d36"/><rect x="0" y="249" width="820" height="1" fill="#262d36"/><rect x="0" y="264" width="820" height="1" fill="#262d36"/><rect x="0" y="280" width="820" height="1" fill="#262d36"/><rect x="0" y="312" width="820" height="1" fill="#262d36"/><rect x="0" y="327" width="820" height="1" fill="#262d36"/><rect x="0" y="343" width="820" height="1" fill="#262d36"/><rect x="0" y="359" width="820" height="1" fill="#262d36"/><rect x="0" y="390" width="820" height="1" fill="#262d36"/><rect x="0" y="406" width="820" height="1" fill="#262d36"/><rect x="0" y="422" width="820" height="1" fill="#262d36"/><rect x="0" y="438" width="820" height="1" fill="#262d36"/><rect x="0" y="469" width="820" height="1" fill="#262d36"/><rect x="0" y="485" width="820" height="1" fill="#262d36"/><rect x="0" y="501" width="820" height="1" fill="#262d36"/><rect x="0" y="516" width="820" height="1" fill="#262d36"/><rect x="0" y="548" width="820" height="1" fill="#262d36"/><rect x="0" y="564" width="820" height="1" fill="#262d36"/><rect x="0" y="579" width="820" height="1" fill="#262d36"/><rect x="0" y="595" width="820" height="1" fill="#262d36"/><rect x="0" y="627" width="820" height="1" fill="#262d36"/><rect x="0" y="642" width="820" height="1" fill="#262d36"/><rect x="0" y="658" width="820" height="1" fill="#262d36"/><rect x="0" y="674" width="820" height="1" fill="#262d36"/><rect x="0" y="705" width="820" height="1" fill="#262d36"/><rect x="0" y="721" width="820" height="1" fill="#262d36"/><rect x="0" y="737" width="820" height="1" fill="#262d36"/><rect x="0" y="753" width="820" height="1" fill="#262d36"/><rect x="0" y="784" width="820" height="1" fill="#262d36"/><rect x="0" y="800" width="820" height="1" fill="#262d36"/><rect x="0" y="816" width="820" height="1" fill="#262d36"/><rect x="0" y="831" width="820" height="1" fill="#262d36"/><rect x="39" y="0" width="1" height="851" fill="#353c47"/><rect x="118" y="0" width="1" height="851" fill="#353c47"/><rect x="197" y="0" width="1" height="851" fill="#353c47"/><rect x="275" y="0" width="1" height="851" fill="#353c47"/><rect x="354" y="0" width="1" height="851" fill="#353c47"/><rect x="433" y="0" width="1" height="851" fill="#353c47"/><rect x="512" y="0" width="1" height="851" fill="#353c47"/><rect x="590" y="0" width="1" height="851" fill="#353c47"/><rect x="669" y="0" width="1" height="851" fill="#353c47"/><rect x="748" y="0" width="1" height="851" fill="#353c47"/><rect x="0" y="60" width="820" height="1" fill="#353c47"/><rect x="0" y="138" width="820" height="1" fill="#353c47"/><rect x="0" y="217" width="820" height="1" fill="#353c47"/><rect x="0" y="296" width="820" height="1" fill="#353c47"/><rect x="0" y="375" width="820" height="1" fill="#353c47"/><rect x="0" y="453" width="820" height="1" fill="#353c47"/><rect x="0" y="532" width="820" height="1" fill="#353c47"/><rect x="0" y="611" width="820" height="1" fill="#353c47"/><rect x="0" y="690" width="820" height="1" fill="#353c47"/><rect x="0" y="768" width="820" height="1" fill="#353c47"/><rect x="0" y="847" width="820" height="1" fill="#353c47"/></svg>
<svg class="s" style="left:758px;top:180px;" width="54" height="14" viewBox="0 0 54 14"><rect x="2" y="7" width="11" height="3" fill="#fff"/><rect x="25" y="2" width="9" height="9" fill="#fff"/><rect x="23" y="4" width="9" height="9" fill="#fff" stroke="#212831" stroke-width="0.8"/><rect x="25.5" y="6.5" width="4" height="4" fill="#212831"/><path d="M43 3L51 11M51 3L43 11" stroke="#fff" stroke-width="2.2"/></svg>
<svg class="s" style="left:0px;top:820px;" width="200" height="200" viewBox="0 0 200 200"><g stroke="#fff" stroke-width="1.1" fill="none"><path d="M17.1 8.9L26.2 20.9L35.1 8.9M26.2 20.9V33.7"/><path d="M26.2 52.2V165.2"/><path d="M17.1 77L26.2 52.2L35.1 77"/><rect x="15.3" y="165.4" width="21.4" height="21.2"/><path d="M36.8 176.4H149.8"/><path d="M125 167L149.8 176.4L125 185"/><path d="M171.2 164L189.2 189.2M189.2 164L171.2 189.2"/></g></svg>
<div class="b" style="left:820px;top:150px;width:7px;height:993px;background:#2a2e35;"></div>
<div class="b" style="left:825px;top:173px;width:1px;height:970px;background:#23272e;"></div>
<div class="b" style="left:0px;top:1023px;width:820px;height:15px;background:#272b31;"></div>
<div class="b" style="left:0px;top:1024px;width:14px;height:14px;background:#383e48;"></div>
<div class="b" style="left:16px;top:1024px;width:14px;height:14px;background:#383e48;"></div>
<div class="b" style="left:32px;top:1024px;width:14px;height:14px;background:#383e48;"></div>
<div class="b" style="left:48px;top:1024px;width:14px;height:14px;background:#383e48;"></div>
<div class="b" style="left:64px;top:1024px;width:14px;height:14px;background:#383e48;"></div>
<svg class="s" style="left:0px;top:1024px;" width="80" height="14" viewBox="0 0 80 14"><path d="M2 10L7 4L12 10Z" fill="#fff"/><path d="M20 3V11" stroke="#9aa3ae" stroke-width="1"/><path d="M28 3L22 7L28 11Z" fill="#9aa3ae"/><path d="M43 3L37 7L43 11Z" fill="#9aa3ae"/><path d="M52 3L58 7L52 11Z" fill="#9aa3ae"/><path d="M67 3L73 7L67 11Z" fill="#9aa3ae"/><path d="M75 3V11" stroke="#9aa3ae" stroke-width="1"/></svg>
<div class="b" style="left:80px;top:1024px;width:50px;height:14px;background:#56657a;"></div>
<div class="t" style="left:90px;top:1024px;font-size:13px;color:#ffffff;font-weight:bold;font-family:'Liberation Serif',serif;">模型</div>
<div class="b" style="left:132px;top:1024px;width:54px;height:14px;background:#383e48;"></div>
<div class="t" style="left:143px;top:1024px;font-size:13px;color:#e8eaed;font-family:'Liberation Serif',serif;">配置1</div>
<div class="b" style="left:189px;top:1024px;width:54px;height:14px;background:#383e48;"></div>
<div class="t" style="left:200px;top:1024px;font-size:13px;color:#e8eaed;font-family:'Liberation Serif',serif;">配置2</div>
<div class="b" style="left:246px;top:1024px;width:31px;height:14px;background:#383e48;"></div>
<div class="t" style="left:257px;top:1024px;font-size:14px;color:#ffffff;font-weight:bold;">+</div>
<div class="b" style="left:0px;top:1038px;width:820px;height:6px;background:#2c3037;"></div>
<div class="b" style="left:0px;top:1044px;width:820px;height:99px;background:#2b2f35;"></div>
<div class="b" style="left:0px;top:1044px;width:20px;height:99px;background:#3b424c;"></div>
<svg class="s" style="left:5px;top:1049px;" width="10" height="10" viewBox="0 0 10 10"><path d="M1 1L9 9M9 1L1 9" stroke="#7c8590" stroke-width="1.6"/></svg>
<div class="t" style="left:22px;top:1045px;font-size:15px;color:#d9dce0;font-family:'Liberation Serif',serif;">指令:</div>
<div class="t" style="left:22px;top:1064px;font-size:15px;color:#d9dce0;font-family:'Liberation Serif',serif;">指令:</div>
<div class="t" style="left:22px;top:1083px;font-size:15px;color:#d9dce0;font-family:'Liberation Serif',serif;">指令:</div>
<div class="b" style="left:21px;top:1118px;width:799px;height:1px;background:#6b7280;"></div>
<div class="t" style="left:22px;top:1122px;font-size:15px;color:#d9dce0;font-family:'Liberation Serif',serif;">指令:</div>
<div class="b" style="left:65px;top:1122px;width:1px;height:16px;background:#d9dce0;"></div>
<div class="b" style="left:805px;top:1044px;width:15px;height:74px;background:#363b42;"></div>
<svg class="s" style="left:805px;top:1044px;" width="15" height="74" viewBox="0 0 15 74"><path d="M4 8L7.5 5L11 8" stroke="#8a929c" stroke-width="1" fill="none"/><path d="M4 66L7.5 69L11 66" stroke="#8a929c" stroke-width="1" fill="none"/></svg>
<div class="b" style="left:807px;top:1085px;width:11px;height:16px;background:#5b626c;"></div>
<div class="b" style="left:827px;top:151px;width:276px;height:991px;background:#444d5a;"></div>
<div class="b" style="left:827px;top:151px;width:3px;height:991px;background:#4a5361;"></div>
<div class="b" style="left:828px;top:151px;width:275px;height:22px;background:#535d6b;"></div>
<div class="t" style="left:845px;top:155px;font-size:15px;color:#f2f4f6;font-weight:bold;font-family:'Liberation Serif',serif;">計算器</div>
<svg class="s" style="left:1083px;top:155px;" width="12" height="12" viewBox="0 0 12 12"><path d="M1.5 1.5L10.5 10.5M10.5 1.5L1.5 10.5" stroke="#fff" stroke-width="1.3"/></svg>
<div class="b" style="left:842px;top:183px;width:20px;height:20px;background:transparent;border:1px solid #7d8691;"></div>
<svg class="s" style="left:842px;top:183px;" width="20" height="20" viewBox="0 0 20 20"><g transform="rotate(-40 10 10)"><rect x="3" y="6" width="14" height="8" rx="2.5" fill="#fff"/><path d="M10 6H14.5A2.5 2.5 0 0 1 17 8.5V11.5A2.5 2.5 0 0 1 14.5 14H10Z" fill="#f0b050"/></g></svg>
<div class="b" style="left:868px;top:183px;width:20px;height:20px;background:transparent;border:1px solid #7d8691;"></div>
<svg class="s" style="left:868px;top:183px;" width="20" height="20" viewBox="0 0 20 20"><circle cx="8" cy="8" r="5.5" stroke="#fff" stroke-width="1.2" fill="none"/><path d="M8 4.5V8L10 9.5" stroke="#fff" stroke-width="1.1" fill="none"/><g transform="rotate(-40 13 14)"><rect x="8" y="11" width="10" height="6" rx="2" fill="#fff"/><path d="M13 11H16A2 2 0 0 1 18 13V15A2 2 0 0 1 16 17H13Z" fill="#f0b050"/></g></svg>
<div class="b" style="left:894px;top:183px;width:20px;height:20px;background:transparent;border:1px solid #7d8691;"></div>
<svg class="s" style="left:894px;top:183px;" width="20" height="20" viewBox="0 0 20 20"><rect x="3" y="4" width="13" height="15" fill="#f0a860"/><rect x="6" y="2" width="7" height="4" fill="#c07838"/><rect x="6" y="9" width="12" height="8" fill="#3a4250" stroke="#fff" stroke-width="0.8"/><path d="M8 11L10 13L8 14.5M11 15H15" stroke="#fff" stroke-width="0.8" fill="none"/></svg>
<div class="b" style="left:920px;top:183px;width:20px;height:20px;background:transparent;border:1px solid #7d8691;"></div>
<svg class="s" style="left:920px;top:183px;" width="20" height="20" viewBox="0 0 20 20"><path d="M2 6H10M6 2V10" stroke="#4fa6e8" stroke-width="1.4"/><path d="M9 8L9 19L12 16L14 20L16 19L14 15H18Z" fill="#fff"/></svg>
<div class="b" style="left:946px;top:183px;width:20px;height:20px;background:transparent;border:1px solid #7d8691;"></div>
<svg class="s" style="left:946px;top:183px;" width="20" height="20" viewBox="0 0 20 20"><rect x="2" y="5" width="16" height="3" fill="#4fa6e8"/><path d="M5 6.5H15" stroke="#fff" stroke-width="0.8" stroke-dasharray="1 1"/><rect x="2" y="10" width="16" height="6" fill="#f0c040"/><path d="M4 10V13M7 10V12M10 10V13M13 10V12M16 10V13" stroke="#3a4250" stroke-width="0.8"/></svg>
<div class="b" style="left:972px;top:183px;width:20px;height:20px;background:transparent;border:1px solid #7d8691;"></div>
<svg class="s" style="left:972px;top:183px;" width="20" height="20" viewBox="0 0 20 20"><path d="M9 3L2 16H16Z" stroke="#fff" stroke-width="1.3" fill="none"/><path d="M10 4A7 7 0 0 1 16 10" stroke="#f0c040" stroke-width="1.2" fill="none"/><path d="M14 10L16 12.5L18 10" stroke="#f0c040" stroke-width="1" fill="none"/></svg>
<div class="b" style="left:998px;top:183px;width:20px;height:20px;background:transparent;border:1px solid #7d8691;"></div>
<svg class="s" style="left:998px;top:183px;" width="20" height="20" viewBox="0 0 20 20"><path d="M4 4L16 16M16 4L4 16" stroke="#e0e4ea" stroke-width="1"/></svg>
<div class="b" style="left:1024px;top:183px;width:20px;height:20px;background:transparent;border:1px solid #7d8691;"></div>
<svg class="s" style="left:1024px;top:183px;" width="20" height="20" viewBox="0 0 20 20"><circle cx="10" cy="10" r="8" fill="#4fa6e8"/><text x="10" y="14.5" font-size="12" text-anchor="middle" fill="#fff" font-family="Liberation Sans" font-weight="bold">?</text></svg>
<div class="b" style="left:837px;top:218px;width:241px;height:80px;background:#444d5a;border:1px solid #646d78;"></div>
<div class="b" style="left:837px;top:303px;width:241px;height:20px;background:#444d5a;border:1px solid #646d78;"></div>
<div class="b" style="left:1084px;top:204px;width:14px;height:934px;background:#3b414b;"></div>
<div class="b" style="left:1084px;top:204px;width:14px;height:17px;background:#353a43;"></div>
<svg class="s" style="left:1084px;top:204px;" width="14" height="17" viewBox="0 0 14 17"><path d="M3.5 10L7 6.5L10.5 10" stroke="#8a929c" stroke-width="1" fill="none"/></svg>
<div class="b" style="left:1084px;top:221px;width:14px;height:229px;background:#535c67;"></div>
<svg class="s" style="left:1084px;top:1124px;" width="14" height="16" viewBox="0 0 14 16"><path d="M3.5 6L7 9.5L10.5 6" stroke="#8a929c" stroke-width="1" fill="none"/></svg>
<div class="t" style="left:840px;top:336px;font-size:15px;color:#f2f4f6;font-weight:bold;font-family:'Liberation Serif',serif;">數字鍵盤&lt;&lt;</div>
<div class="b" style="left:847px;top:353px;width:36px;height:20px;border:1px solid #858d97;color:#eef0f3;font-size:13px;line-height:18px;text-align:center;font-family:'Liberation Sans',sans-serif;">C</div>
<div class="b" style="left:893px;top:353px;width:36px;height:20px;border:1px solid #858d97;color:#eef0f3;font-size:13px;line-height:18px;text-align:center;font-family:'Liberation Sans',sans-serif;">&lt;--</div>
<div class="b" style="left:939px;top:353px;width:36px;height:20px;border:1px solid #858d97;color:#eef0f3;font-size:13px;line-height:18px;text-align:center;font-family:'Liberation Sans',sans-serif;">sqrt</div>
<div class="b" style="left:985px;top:353px;width:36px;height:20px;border:1px solid #858d97;color:#eef0f3;font-size:13px;line-height:18px;text-align:center;font-family:'Liberation Sans',sans-serif;">/</div>
<div class="b" style="left:1031px;top:353px;width:36px;height:20px;border:1px solid #858d97;color:#eef0f3;font-size:13px;line-height:18px;text-align:center;font-family:'Liberation Sans',sans-serif;">1/x</div>
<div class="b" style="left:847px;top:380px;width:36px;height:20px;border:1px solid #858d97;color:#eef0f3;font-size:13px;line-height:18px;text-align:center;font-family:'Liberation Sans',sans-serif;">7</div>
<div class="b" style="left:893px;top:380px;width:36px;height:20px;border:1px solid #858d97;color:#eef0f3;font-size:13px;line-height:18px;text-align:center;font-family:'Liberation Sans',sans-serif;">8</div>
<div class="b" style="left:939px;top:380px;width:36px;height:20px;border:1px solid #858d97;color:#eef0f3;font-size:13px;line-height:18px;text-align:center;font-family:'Liberation Sans',sans-serif;">9</div>
<div class="b" style="left:985px;top:380px;width:36px;height:20px;border:1px solid #858d97;color:#eef0f3;font-size:13px;line-height:18px;text-align:center;font-family:'Liberation Sans',sans-serif;">*</div>
<div class="b" style="left:1031px;top:380px;width:36px;height:20px;border:1px solid #858d97;color:#eef0f3;font-size:13px;line-height:18px;text-align:center;font-family:'Liberation Sans',sans-serif;">x^2</div>
<div class="b" style="left:847px;top:407px;width:36px;height:20px;border:1px solid #858d97;color:#eef0f3;font-size:13px;line-height:18px;text-align:center;font-family:'Liberation Sans',sans-serif;">4</div>
<div class="b" style="left:893px;top:407px;width:36px;height:20px;border:1px solid #858d97;color:#eef0f3;font-size:13px;line-height:18px;text-align:center;font-family:'Liberation Sans',sans-serif;">5</div>
<div class="b" style="left:939px;top:407px;width:36px;height:20px;border:1px solid #858d97;color:#eef0f3;font-size:13px;line-height:18px;text-align:center;font-family:'Liberation Sans',sans-serif;">6</div>
<div class="b" style="left:985px;top:407px;width:36px;height:20px;border:1px solid #858d97;color:#eef0f3;font-size:13px;line-height:18px;text-align:center;font-family:'Liberation Sans',sans-serif;">+</div>
<div class="b" style="left:1031px;top:407px;width:36px;height:20px;border:1px solid #858d97;color:#eef0f3;font-size:13px;line-height:18px;text-align:center;font-family:'Liberation Sans',sans-serif;">x^3</div>
<div class="b" style="left:847px;top:434px;width:36px;height:20px;border:1px solid #858d97;color:#eef0f3;font-size:13px;line-height:18px;text-align:center;font-family:'Liberation Sans',sans-serif;">1</div>
<div class="b" style="left:893px;top:434px;width:36px;height:20px;border:1px solid #858d97;color:#eef0f3;font-size:13px;line-height:18px;text-align:center;font-family:'Liberation Sans',sans-serif;">2</div>
<div class="b" style="left:939px;top:434px;width:36px;height:20px;border:1px solid #858d97;color:#eef0f3;font-size:13px;line-height:18px;text-align:center;font-family:'Liberation Sans',sans-serif;">3</div>
<div class="b" style="left:985px;top:434px;width:36px;height:20px;border:1px solid #858d97;color:#eef0f3;font-size:13px;line-height:18px;text-align:center;font-family:'Liberation Sans',sans-serif;">-</div>
<div class="b" style="left:1031px;top:434px;width:36px;height:20px;border:1px solid #858d97;color:#eef0f3;font-size:13px;line-height:18px;text-align:center;font-family:'Liberation Sans',sans-serif;">x^y</div>
<div class="b" style="left:847px;top:461px;width:36px;height:20px;border:1px solid #858d97;color:#eef0f3;font-size:13px;line-height:18px;text-align:center;font-family:'Liberation Sans',sans-serif;">0</div>
<div class="b" style="left:893px;top:461px;width:36px;height:20px;border:1px solid #858d97;color:#eef0f3;font-size:13px;line-height:18px;text-align:center;font-family:'Liberation Sans',sans-serif;">.</div>
<div class="b" style="left:939px;top:461px;width:36px;height:20px;border:1px solid #858d97;color:#eef0f3;font-size:13px;line-height:18px;text-align:center;font-family:'Liberation Sans',sans-serif;">pi</div>
<div class="b" style="left:985px;top:461px;width:36px;height:20px;border:1px solid #858d97;color:#eef0f3;font-size:13px;line-height:18px;text-align:center;font-family:'Liberation Sans',sans-serif;">(</div>
<div class="b" style="left:1031px;top:461px;width:36px;height:20px;border:1px solid #858d97;color:#eef0f3;font-size:13px;line-height:18px;text-align:center;font-family:'Liberation Sans',sans-serif;">)</div>
<div class="b" style="left:847px;top:488px;width:36px;height:20px;border:1px solid #858d97;color:#eef0f3;font-size:13px;line-height:18px;text-align:center;font-family:'Liberation Sans',sans-serif;">=</div>
<div class="b" style="left:893px;top:488px;width:36px;height:20px;border:1px solid #858d97;color:#eef0f3;font-size:13px;line-height:18px;text-align:center;font-family:'Liberation Sans',sans-serif;">MS</div>
<div class="b" style="left:939px;top:488px;width:36px;height:20px;border:1px solid #858d97;color:#eef0f3;font-size:13px;line-height:18px;text-align:center;font-family:'Liberation Sans',sans-serif;">M+</div>
<div class="b" style="left:985px;top:488px;width:36px;height:20px;border:1px solid #858d97;color:#eef0f3;font-size:13px;line-height:18px;text-align:center;font-family:'Liberation Sans',sans-serif;">MR</div>
<div class="b" style="left:1031px;top:488px;width:36px;height:20px;border:1px solid #858d97;color:#eef0f3;font-size:13px;line-height:18px;text-align:center;font-family:'Liberation Sans',sans-serif;">MC</div>
<div class="t" style="left:840px;top:528px;font-size:15px;color:#f2f4f6;font-weight:bold;font-family:'Liberation Serif',serif;">科學&lt;&lt;</div>
<div class="b" style="left:847px;top:545px;width:36px;height:20px;border:1px solid #858d97;color:#eef0f3;font-size:13px;line-height:18px;text-align:center;font-family:'Liberation Sans',sans-serif;">sin</div>
<div class="b" style="left:893px;top:545px;width:36px;height:20px;border:1px solid #858d97;color:#eef0f3;font-size:13px;line-height:18px;text-align:center;font-family:'Liberation Sans',sans-serif;">cos</div>
<div class="b" style="left:939px;top:545px;width:36px;height:20px;border:1px solid #858d97;color:#eef0f3;font-size:13px;line-height:18px;text-align:center;font-family:'Liberation Sans',sans-serif;">tan</div>
<div class="b" style="left:985px;top:545px;width:36px;height:20px;border:1px solid #858d97;color:#eef0f3;font-size:13px;line-height:18px;text-align:center;font-family:'Liberation Sans',sans-serif;">log</div>
<div class="b" style="left:1031px;top:545px;width:36px;height:20px;border:1px solid #858d97;color:#eef0f3;font-size:13px;line-height:18px;text-align:center;font-family:'Liberation Sans',sans-serif;">10^x</div>
<div class="b" style="left:847px;top:572px;width:36px;height:20px;border:1px solid #858d97;color:#eef0f3;font-size:13px;line-height:18px;text-align:center;font-family:'Liberation Sans',sans-serif;">asin</div>
<div class="b" style="left:893px;top:572px;width:36px;height:20px;border:1px solid #858d97;color:#eef0f3;font-size:13px;line-height:18px;text-align:center;font-family:'Liberation Sans',sans-serif;">acos</div>
<div class="b" style="left:939px;top:572px;width:36px;height:20px;border:1px solid #858d97;color:#eef0f3;font-size:13px;line-height:18px;text-align:center;font-family:'Liberation Sans',sans-serif;">atan</div>
<div class="b" style="left:985px;top:572px;width:36px;height:20px;border:1px solid #858d97;color:#eef0f3;font-size:13px;line-height:18px;text-align:center;font-family:'Liberation Sans',sans-serif;">ln</div>
<div class="b" style="left:1031px;top:572px;width:36px;height:20px;border:1px solid #858d97;color:#eef0f3;font-size:13px;line-height:18px;text-align:center;font-family:'Liberation Sans',sans-serif;">e^x</div>
<div class="b" style="left:847px;top:599px;width:36px;height:20px;border:1px solid #858d97;color:#eef0f3;font-size:13px;line-height:18px;text-align:center;font-family:'Liberation Sans',sans-serif;">r2d</div>
<div class="b" style="left:893px;top:599px;width:36px;height:20px;border:1px solid #858d97;color:#eef0f3;font-size:13px;line-height:18px;text-align:center;font-family:'Liberation Sans',sans-serif;">d2r</div>
<div class="b" style="left:939px;top:599px;width:36px;height:20px;border:1px solid #858d97;color:#eef0f3;font-size:13px;line-height:18px;text-align:center;font-family:'Liberation Sans',sans-serif;">abs</div>
<div class="b" style="left:985px;top:599px;width:36px;height:20px;border:1px solid #858d97;color:#eef0f3;font-size:13px;line-height:18px;text-align:center;font-family:'Liberation Sans',sans-serif;">rnd</div>
<div class="b" style="left:1031px;top:599px;width:36px;height:20px;border:1px solid #858d97;color:#eef0f3;font-size:13px;line-height:18px;text-align:center;font-family:'Liberation Sans',sans-serif;">trunc</div>
<div class="t" style="left:840px;top:639px;font-size:15px;color:#f2f4f6;font-weight:bold;font-family:'Liberation Serif',serif;">變數&lt;&lt;</div>
<div class="b" style="left:847px;top:656px;width:20px;height:20px;background:transparent;border:1px solid #7d8691;"></div>
<svg class="s" style="left:847px;top:656px;" width="84" height="20" viewBox="0 0 84 20"><text x="4" y="16" font-size="15" font-style="italic" fill="#4fa6e8" font-family="Liberation Serif">x</text><text x="12" y="10" font-size="9" fill="#f0c040" font-family="Liberation Sans">+</text><text x="29" y="16" font-size="15" font-style="italic" fill="#4fa6e8" font-family="Liberation Serif">x</text><text x="37" y="10" font-size="9" fill="#f0c040" font-family="Liberation Sans">+</text><text x="53" y="15" font-size="15" font-style="italic" fill="#9aa3ae" font-family="Liberation Serif">x</text><text x="60" y="18" font-size="8" fill="#9aa3ae" font-family="Liberation Sans">×</text><rect x="80" y="4" width="10" height="12" fill="#fff"/><rect x="81" y="6" width="8" height="2.5" fill="#3a4250"/><g fill="#3a4250"><rect x="81.5" y="10" width="2" height="2"/><rect x="84.5" y="10" width="2" height="2"/><rect x="87" y="10" width="1.5" height="2"/><rect x="81.5" y="13" width="2" height="2"/><rect x="84.5" y="13" width="2" height="2"/><rect x="87" y="13" width="1.5" height="2"/></g></svg>
<div class="b" style="left:838px;top:677px;width:240px;height:138px;background:#444d5a;border:1px solid #646d78;"></div>
<div class="b" style="left:1061px;top:678px;width:16px;height:136px;background:#3b414b;"></div>
<div class="b" style="left:1061px;top:695px;width:16px;height:80px;background:#535c67;"></div>
<svg class="s" style="left:1061px;top:678px;" width="16" height="136" viewBox="0 0 16 136"><path d="M4.5 11L8 7.5L11.5 11" stroke="#8a929c" stroke-width="1" fill="none"/><path d="M4.5 125L8 128.5L11.5 125" stroke="#8a929c" stroke-width="1" fill="none"/></svg>
<svg class="s" style="left:842px;top:679px;" width="40" height="135" viewBox="0 0 40 135"><rect x="3" y="5" width="8" height="8" fill="#e8eaed"/><path d="M4.5 9H9.5" stroke="#333" stroke-width="1.2"/><path d="M18 3H22L23 4.5H29V15H18Z" fill="#f5b860"/><path d="M27 13L30 17" stroke="#4fa6e8" stroke-width="1.5"/><path d="M28 14V135" stroke="#555e69" stroke-width="1" stroke-dasharray="1 1"/></svg>
<div class="t" style="left:881px;top:679px;font-size:12px;color:#f0f2f5;">變數範例</div>
<svg class="s" style="left:880px;top:696px;" width="14" height="14" viewBox="0 0 14 14"><text x="2" y="13" font-size="14" font-weight="bold" fill="#5ab0e8" font-family="Liberation Serif">k</text></svg>
<div class="t" style="left:900px;top:698px;font-size:13px;color:#f0f2f5;">Phi</div>
<svg class="s" style="left:881px;top:717px;" width="11" height="11" viewBox="0 0 11 11"><path d="M1.2 1C3.6 0.6 4.2 2.5 5.2 5.2C6.2 8 6.8 9.6 9.6 9.3" stroke="#5ab0e8" stroke-width="1.6" fill="none"/><path d="M9 1.2L1 9.5" stroke="#5ab0e8" stroke-width="0.9"/><path d="M7.5 1.2H10.2M0 9.5H2.6" stroke="#5ab0e8" stroke-width="0.8"/></svg>
<div class="t" style="left:900px;top:716px;font-size:13px;color:#f0f2f5;">dee</div>
<svg class="s" style="left:881px;top:735px;" width="11" height="11" viewBox="0 0 11 11"><path d="M1.2 1C3.6 0.6 4.2 2.5 5.2 5.2C6.2 8 6.8 9.6 9.6 9.3" stroke="#5ab0e8" stroke-width="1.6" fill="none"/><path d="M9 1.2L1 9.5" stroke="#5ab0e8" stroke-width="0.9"/><path d="M7.5 1.2H10.2M0 9.5H2.6" stroke="#5ab0e8" stroke-width="0.8"/></svg>
<div class="t" style="left:900px;top:734px;font-size:13px;color:#f0f2f5;">ille</div>
<svg class="s" style="left:881px;top:753px;" width="11" height="11" viewBox="0 0 11 11"><path d="M1.2 1C3.6 0.6 4.2 2.5 5.2 5.2C6.2 8 6.8 9.6 9.6 9.3" stroke="#5ab0e8" stroke-width="1.6" fill="none"/><path d="M9 1.2L1 9.5" stroke="#5ab0e8" stroke-width="0.9"/><path d="M7.5 1.2H10.2M0 9.5H2.6" stroke="#5ab0e8" stroke-width="0.8"/></svg>
<div class="t" style="left:900px;top:752px;font-size:13px;color:#f0f2f5;">mee</div>
<svg class="s" style="left:881px;top:771px;" width="11" height="11" viewBox="0 0 11 11"><path d="M1.2 1C3.6 0.6 4.2 2.5 5.2 5.2C6.2 8 6.8 9.6 9.6 9.3" stroke="#5ab0e8" stroke-width="1.6" fill="none"/><path d="M9 1.2L1 9.5" stroke="#5ab0e8" stroke-width="0.9"/><path d="M7.5 1.2H10.2M0 9.5H2.6" stroke="#5ab0e8" stroke-width="0.8"/></svg>
<div class="t" style="left:900px;top:770px;font-size:13px;color:#f0f2f5;">nee</div>
<svg class="s" style="left:881px;top:789px;" width="11" height="11" viewBox="0 0 11 11"><path d="M1.2 1C3.6 0.6 4.2 2.5 5.2 5.2C6.2 8 6.8 9.6 9.6 9.3" stroke="#5ab0e8" stroke-width="1.6" fill="none"/><path d="M9 1.2L1 9.5" stroke="#5ab0e8" stroke-width="0.9"/><path d="M7.5 1.2H10.2M0 9.5H2.6" stroke="#5ab0e8" stroke-width="0.8"/></svg>
<div class="t" style="left:900px;top:788px;font-size:13px;color:#f0f2f5;">rad</div>
<svg class="s" style="left:881px;top:807px;" width="11" height="11" viewBox="0 0 11 11"><path d="M1.2 1C3.6 0.6 4.2 2.5 5.2 5.2C6.2 8 6.8 9.6 9.6 9.3" stroke="#5ab0e8" stroke-width="1.6" fill="none"/><path d="M9 1.2L1 9.5" stroke="#5ab0e8" stroke-width="0.9"/><path d="M7.5 1.2H10.2M0 9.5H2.6" stroke="#5ab0e8" stroke-width="0.8"/></svg>
<div class="t" style="left:900px;top:806px;font-size:13px;color:#f0f2f5;">vee</div>
<div class="b" style="left:838px;top:814px;width:240px;height:1px;background:#646d78;"></div>
<div class="b" style="left:839px;top:815px;width:238px;height:6px;background:#444d5a;"></div>
<div class="t" style="left:840px;top:817px;font-size:12px;color:#f0f2f5;">詳細資料</div>
<div class="b" style="left:839px;top:836px;width:238px;height:80px;background:#444d5a;border:1px solid #646d78;"></div>
<div class="t" style="left:840px;top:948px;font-size:15px;color:#f2f4f6;font-weight:bold;font-family:'Liberation Serif',serif;">單位轉換&lt;&lt;</div>
<div class="b" style="left:1072px;top:966px;width:1px;height:96px;background:#59626d;"></div>
<div class="b" style="left:943px;top:966px;width:1px;height:96px;background:#59626d;"></div>
<div class="t" style="left:865px;top:969px;font-size:12px;color:#eef0f3;">單位類型</div>
<div class="t" style="left:948px;top:969px;font-size:12px;color:#eef0f3;">長度</div>
<div class="b" style="left:840px;top:984px;width:233px;height:1px;background:#59626d;"></div>
<div class="t" style="left:865px;top:988px;font-size:12px;color:#eef0f3;">轉換自</div>
<div class="t" style="left:948px;top:988px;font-size:12px;color:#eef0f3;">公尺</div>
<div class="b" style="left:840px;top:1003px;width:233px;height:1px;background:#59626d;"></div>
<div class="t" style="left:865px;top:1007px;font-size:12px;color:#eef0f3;">轉換為</div>
<div class="t" style="left:948px;top:1007px;font-size:12px;color:#eef0f3;">公尺</div>
<div class="b" style="left:840px;top:1022px;width:233px;height:1px;background:#59626d;"></div>
<div class="t" style="left:865px;top:1026px;font-size:12px;color:#eef0f3;">要轉換的數值</div>
<div class="t" style="left:948px;top:1026px;font-size:12px;color:#eef0f3;">0</div>
<div class="b" style="left:840px;top:1041px;width:233px;height:1px;background:#59626d;"></div>
<div class="t" style="left:865px;top:1045px;font-size:12px;color:#eef0f3;">已轉換的數值</div>
<div class="t" style="left:948px;top:1045px;font-size:12px;color:#eef0f3;">0</div>
<div class="b" style="left:840px;top:1060px;width:233px;height:1px;background:#59626d;"></div>
<div class="t" style="left:840px;top:1092px;font-size:15px;color:#f2f4f6;font-weight:bold;font-family:'Liberation Serif',serif;">文字運算&lt;&lt;</div>
<div class="t" style="left:844px;top:1109px;font-size:12px;color:#eef0f3;">單運算</div>
<div class="b" style="left:844px;top:1126px;width:51px;height:20px;border:1px solid #858d97;color:#eef0f3;font-size:13px;line-height:16px;text-align:center;">A+B</div>
<div class="b" style="left:902px;top:1126px;width:51px;height:20px;border:1px solid #858d97;color:#eef0f3;font-size:13px;line-height:16px;text-align:center;">A-B</div>
<div class="b" style="left:960px;top:1126px;width:51px;height:20px;border:1px solid #858d97;color:#eef0f3;font-size:13px;line-height:16px;text-align:center;">A*B</div>
<div class="b" style="left:1018px;top:1126px;width:51px;height:20px;border:1px solid #858d97;color:#eef0f3;font-size:13px;line-height:16px;text-align:center;">A/B</div>
<div class="b" style="left:1103px;top:150px;width:6px;height:993px;background:#2c3038;"></div>
<div class="b" style="left:1107px;top:150px;width:2px;height:993px;background:#23272e;"></div>
<div class="b" style="left:1109px;top:151px;width:222px;height:991px;background:#444d5a;"></div>
<div class="b" style="left:1109px;top:151px;width:2px;height:991px;background:#4a5361;"></div>
<div class="b" style="left:1110px;top:151px;width:221px;height:22px;background:#535d6b;"></div>
<div class="t" style="left:1120px;top:155px;font-size:15px;color:#f2f4f6;font-weight:bold;font-family:'Liberation Serif',serif;">特性</div>
<svg class="s" style="left:1310px;top:155px;" width="12" height="12" viewBox="0 0 12 12"><path d="M1.5 1.5L10.5 10.5M10.5 1.5L1.5 10.5" stroke="#fff" stroke-width="1.3"/></svg>
<div class="t" style="left:1122px;top:187px;font-size:12px;color:#f0f2f5;">無選取</div>
<svg class="s" style="left:1236.0px;top:190.5px;" width="9" height="5" viewBox="0 0 9 5"><path d="M0 0H9L4.5 5Z" fill="#ffffff"/></svg>
<div class="b" style="left:1117px;top:206px;width:131px;height:1px;background:#59626d;"></div>
<div class="b" style="left:1254px;top:183px;width:20px;height:20px;background:transparent;border:1px solid #4f5864;"></div>
<div class="b" style="left:1278px;top:183px;width:20px;height:20px;background:transparent;border:1px solid #4f5864;"></div>
<div class="b" style="left:1302px;top:183px;width:20px;height:20px;background:transparent;border:1px solid #4f5864;"></div>
<svg class="s" style="left:1254px;top:183px;" width="20" height="20" viewBox="0 0 20 20"><rect x="4" y="3" width="10" height="10" stroke="#fff" stroke-width="1" fill="none"/><rect x="7" y="6" width="10" height="10" stroke="#fff" stroke-width="1" fill="#444d5a"/><path d="M10 11H14M12 9V13" stroke="#fff" stroke-width="1"/></svg>
<svg class="s" style="left:1278px;top:183px;" width="20" height="20" viewBox="0 0 20 20"><rect x="8" y="3" width="10" height="9" fill="#57aef0"/><path d="M7 9A5 5 0 1 0 11 17" stroke="#fff" stroke-width="1.2" fill="none"/><path d="M11 10V19L13 17L15 20L16 19L14.5 16H17Z" fill="#fff"/></svg>
<svg class="s" style="left:1302px;top:183px;" width="20" height="20" viewBox="0 0 20 20"><path d="M3 3V15L6 12L8 17L10 16L8 11H12Z" stroke="#fff" stroke-width="1" fill="none"/><path d="M15 4L11 11H14L12 17L18 9H15L17 4Z" fill="#f0c040"/></svg>
<div class="t" style="left:1122px;top:239px;font-size:12px;color:#f0f2f5;">基本</div>
<svg class="s" style="left:1282.0px;top:244.5px;" width="10" height="6" viewBox="0 0 10 6"><path d="M0 0H10L5.0 6Z" fill="#ffffff"/></svg>
<div class="b" style="left:1117px;top:254px;width:180px;height:2px;background:#d5dbe3;"></div>
<div class="t" style="left:1123px;top:263px;font-size:12px;color:#eef0f3;">顏色</div>
<div class="b" style="left:1117px;top:280px;width:180px;height:1px;background:#4e5763;"></div>
<div class="t" style="left:1123px;top:288px;font-size:12px;color:#eef0f3;">圖層</div>
<div class="t" style="left:1188px;top:288px;font-size:12px;color:#eef0f3;">0</div>
<div class="b" style="left:1117px;top:305px;width:180px;height:1px;background:#4e5763;"></div>
<div class="t" style="left:1123px;top:313px;font-size:12px;color:#eef0f3;">線型</div>
<div class="b" style="left:1117px;top:330px;width:180px;height:1px;background:#4e5763;"></div>
<div class="t" style="left:1123px;top:338px;font-size:12px;color:#eef0f3;">線型比例</div>
<div class="t" style="left:1188px;top:338px;font-size:12px;color:#eef0f3;">1</div>
<div class="b" style="left:1117px;top:355px;width:180px;height:1px;background:#4e5763;"></div>
<div class="t" style="left:1123px;top:363px;font-size:12px;color:#eef0f3;">線寬</div>
<div class="b" style="left:1117px;top:380px;width:180px;height:1px;background:#4e5763;"></div>
<div class="t" style="left:1123px;top:388px;font-size:12px;color:#eef0f3;">透明度</div>
<div class="t" style="left:1188px;top:388px;font-size:12px;color:#eef0f3;">ByLayer</div>
<div class="b" style="left:1117px;top:405px;width:180px;height:1px;background:#4e5763;"></div>
<div class="t" style="left:1123px;top:413px;font-size:12px;color:#eef0f3;">厚度</div>
<div class="t" style="left:1188px;top:413px;font-size:12px;color:#eef0f3;">0</div>
<div class="b" style="left:1117px;top:430px;width:180px;height:1px;background:#4e5763;"></div>
<div class="b" style="left:1184px;top:256px;width:1px;height:175px;background:#4e5763;"></div>
<svg class="s" style="left:1188px;top:262px;" width="13" height="12" viewBox="0 0 13 12"><rect x="1" y="1" width="10" height="10" fill="#fff" stroke="#111" stroke-width="1"/></svg>
<div class="t" style="left:1202px;top:262px;font-size:12px;color:#eef0f3;">隨圖層</div>
<div class="b" style="left:1188px;top:318px;width:45px;height:1px;background:#eef0f3;"></div>
<div class="t" style="left:1237px;top:312px;font-size:12px;color:#eef0f3;">隨圖層</div>
<div class="b" style="left:1188px;top:368px;width:40px;height:1px;background:#eef0f3;"></div>
<div class="t" style="left:1231px;top:362px;font-size:12px;color:#eef0f3;">隨圖層</div>
<div class="t" style="left:1122px;top:463px;font-size:12px;color:#f0f2f5;">檢視</div>
<svg class="s" style="left:1282.0px;top:468.5px;" width="10" height="6" viewBox="0 0 10 6"><path d="M0 0H10L5.0 6Z" fill="#ffffff"/></svg>
<div class="b" style="left:1117px;top:478px;width:180px;height:2px;background:#d5dbe3;"></div>
<div class="t" style="left:1123px;top:488px;font-size:12px;color:#eef0f3;">中心點 X</div>
<div class="t" style="left:1188px;top:488px;font-size:12px;color:#959ca5;">485.4234</div>
<div class="b" style="left:1117px;top:505px;width:180px;height:1px;background:#4e5763;"></div>
<div class="t" style="left:1123px;top:513px;font-size:12px;color:#eef0f3;">中心點 Y</div>
<div class="t" style="left:1188px;top:513px;font-size:12px;color:#959ca5;">417.0199</div>
<div class="b" style="left:1117px;top:530px;width:180px;height:1px;background:#4e5763;"></div>
<div class="t" style="left:1123px;top:538px;font-size:12px;color:#eef0f3;">中心點 Z</div>
<div class="t" style="left:1188px;top:538px;font-size:12px;color:#959ca5;">0</div>
<div class="b" style="left:1117px;top:555px;width:180px;height:1px;background:#4e5763;"></div>
<div class="t" style="left:1123px;top:563px;font-size:12px;color:#eef0f3;">高度</div>
<div class="t" style="left:1188px;top:563px;font-size:12px;color:#959ca5;">540.2537</div>
<div class="b" style="left:1117px;top:580px;width:180px;height:1px;background:#4e5763;"></div>
<div class="t" style="left:1123px;top:588px;font-size:12px;color:#eef0f3;">寬度</div>
<div class="t" style="left:1188px;top:588px;font-size:12px;color:#959ca5;">1035.4333</div>
<div class="b" style="left:1117px;top:605px;width:180px;height:1px;background:#4e5763;"></div>
<div class="b" style="left:1184px;top:480px;width:1px;height:126px;background:#4e5763;"></div>
<div class="t" style="left:1122px;top:638px;font-size:12px;color:#f0f2f5;">其他</div>
<svg class="s" style="left:1282.0px;top:643.5px;" width="10" height="6" viewBox="0 0 10 6"><path d="M0 0H10L5.0 6Z" fill="#ffffff"/></svg>
<div class="b" style="left:1117px;top:653px;width:180px;height:2px;background:#d5dbe3;"></div>
<div class="t" style="left:1123px;top:663px;font-size:12px;color:#eef0f3;">註解比例</div>
<div class="t" style="left:1188px;top:663px;font-size:12px;color:#eef0f3;">1:1</div>
<div class="b" style="left:1117px;top:680px;width:180px;height:1px;background:#4e5763;"></div>
<div class="t" style="left:1123px;top:688px;font-size:12px;color:#eef0f3;">開啟 UCS...</div>
<div class="t" style="left:1188px;top:688px;font-size:12px;color:#eef0f3;">是</div>
<div class="b" style="left:1117px;top:705px;width:180px;height:1px;background:#4e5763;"></div>
<div class="t" style="left:1123px;top:713px;font-size:12px;color:#eef0f3;">在原點顯...</div>
<div class="t" style="left:1188px;top:713px;font-size:12px;color:#eef0f3;">是</div>
<div class="b" style="left:1117px;top:730px;width:180px;height:1px;background:#4e5763;"></div>
<div class="t" style="left:1123px;top:738px;font-size:12px;color:#eef0f3;">每個視埠...</div>
<div class="t" style="left:1188px;top:738px;font-size:12px;color:#eef0f3;">是</div>
<div class="b" style="left:1117px;top:755px;width:180px;height:1px;background:#4e5763;"></div>
<div class="t" style="left:1123px;top:763px;font-size:12px;color:#eef0f3;">UCS 名稱</div>
<div class="b" style="left:1117px;top:780px;width:180px;height:1px;background:#4e5763;"></div>
<div class="t" style="left:1123px;top:788px;font-size:12px;color:#eef0f3;">視覺型式</div>
<div class="t" style="left:1188px;top:788px;font-size:12px;color:#eef0f3;">二維線框</div>
<div class="b" style="left:1117px;top:805px;width:180px;height:1px;background:#4e5763;"></div>
<div class="b" style="left:1184px;top:655px;width:1px;height:151px;background:#4e5763;"></div>
<div class="b" style="left:0px;top:1142px;width:1331px;height:26px;background:#31373f;"></div>
<div class="b" style="left:0px;top:1141px;width:1331px;height:1px;background:#2a2f36;"></div>
<div class="t" style="left:9px;top:1149px;font-size:13px;color:#f0f2f5;font-family:'Liberation Serif',serif;letter-spacing:-0.3px;">773.6433, 295.4470, 0.0000</div>
<div class="b" style="left:274px;top:1146px;width:20px;height:20px;background:#3e4c60;border:1px solid #4a9ee0;"></div>
<div class="b" style="left:322px;top:1146px;width:20px;height:20px;background:#3e4c60;border:1px solid #4a9ee0;"></div>
<div class="b" style="left:346px;top:1146px;width:20px;height:20px;background:#3e4c60;border:1px solid #4a9ee0;"></div>
<div class="b" style="left:370px;top:1146px;width:20px;height:20px;background:#3e4c60;border:1px solid #4a9ee0;"></div>
<div class="b" style="left:394px;top:1146px;width:20px;height:20px;background:#3e4c60;border:1px solid #4a9ee0;"></div>
<div class="b" style="left:418px;top:1146px;width:20px;height:20px;background:#3e4c60;border:1px solid #4a9ee0;"></div>
<div class="b" style="left:466px;top:1146px;width:20px;height:20px;background:#3e4c60;border:1px solid #4a9ee0;"></div>
<div class="b" style="left:514px;top:1146px;width:20px;height:20px;background:#3e4c60;border:1px solid #4a9ee0;"></div>
<svg class="s" style="left:251px;top:1146px;" width="18" height="18" viewBox="0 0 18 18"><path d="M2 3H15M2 7H15M2 11H15M2 15H15M3 2V16M7 2V16M11 2V16M15 2V16" stroke="#fff" stroke-width="1.4"/></svg>
<svg class="s" style="left:275px;top:1146px;" width="18" height="18" viewBox="0 0 18 18"><rect x="2" y="2" width="14" height="14" stroke="#8fc6f0" stroke-width="1.2" fill="none"/><path d="M2 7H16M2 11H16M7 2V16M11 2V16" stroke="#8fc6f0" stroke-width="1.2"/></svg>
<svg class="s" style="left:299px;top:1146px;" width="18" height="18" viewBox="0 0 18 18"><path d="M3 3V15H16" stroke="#fff" stroke-width="1.2" fill="none"/><path d="M3 9H7V15" stroke="#fff" stroke-width="1" fill="none"/></svg>
<svg class="s" style="left:323px;top:1146px;" width="18" height="18" viewBox="0 0 18 18"><circle cx="9" cy="9" r="6" stroke="#fff" stroke-width="1.3" fill="none"/><path d="M9 9H15M9 9L5 5" stroke="#fff" stroke-width="1"/></svg>
<svg class="s" style="left:347px;top:1146px;" width="18" height="18" viewBox="0 0 18 18"><rect x="3" y="3" width="12" height="12" stroke="#fff" stroke-width="1.3" fill="none"/><circle cx="4" cy="4" r="2.5" fill="#e05050"/></svg>
<svg class="s" style="left:371px;top:1146px;" width="18" height="18" viewBox="0 0 18 18"><path d="M3 15H15M3 15L14 4" stroke="#fff" stroke-width="1.2" fill="none"/><circle cx="9" cy="9.5" r="1.5" fill="#fff"/></svg>
<svg class="s" style="left:395px;top:1146px;" width="18" height="18" viewBox="0 0 18 18"><path d="M3 2V15H16M3 15L13 7" stroke="#fff" stroke-width="1.2" fill="none"/><path d="M11 1L8 6H11L9 10L14 4H11L13 1Z" fill="#f0c040"/></svg>
<svg class="s" style="left:419px;top:1146px;" width="18" height="18" viewBox="0 0 18 18"><path d="M2 7H8M5 4V10" stroke="#fff" stroke-width="1.4"/><rect x="7" y="10" width="9" height="5" stroke="#8fc6f0" stroke-width="1.2" fill="none"/></svg>
<svg class="s" style="left:443px;top:1146px;" width="18" height="18" viewBox="0 0 18 18"><path d="M3 5H15M3 9H15M3 13H15" stroke="#fff" stroke-width="2"/></svg>
<svg class="s" style="left:467px;top:1146px;" width="18" height="18" viewBox="0 0 18 18"><rect x="3" y="3" width="12" height="12" rx="2" stroke="#fff" stroke-width="1.5" fill="#7a8088"/></svg>
<svg class="s" style="left:491px;top:1146px;" width="18" height="18" viewBox="0 0 18 18"><path d="M2 5H8M5 2V8" stroke="#fff" stroke-width="1.3"/><rect x="8" y="8" width="6" height="6" stroke="#8fc6f0" stroke-width="1.3" fill="none"/><rect x="10" y="10" width="6" height="6" stroke="#fff" stroke-width="1" fill="none"/></svg>
<svg class="s" style="left:515px;top:1146px;" width="18" height="18" viewBox="0 0 18 18"><rect x="7" y="1" width="10" height="10" stroke="#d0d8e4" stroke-width="1" fill="none"/><path d="M7 4.5H17M7 8H17M10.5 1V11M14 1V11" stroke="#d0d8e4" stroke-width="1"/><rect x="1" y="7" width="10" height="10" fill="#3a78c0" stroke="#8fc6f0" stroke-width="1"/><path d="M12 14L16 14" stroke="#f0c040" stroke-width="1.3"/></svg>
<svg class="s" style="left:1064px;top:1147px;" width="17" height="16" viewBox="0 0 17 16"><rect x="1" y="2" width="15" height="12" stroke="#4fa6e8" stroke-width="1.4" fill="none"/><text x="8.5" y="12" font-size="8" text-anchor="middle" fill="#d0d8e4" font-family="Liberation Sans">0.0</text></svg>
<div class="t" style="left:1082px;top:1148px;font-size:12px;color:#c8cdd3;">公蓮</div>
<svg class="s" style="left:1111.5px;top:1150.5px;" width="9" height="5" viewBox="0 0 9 5"><path d="M0 0H9L4.5 5Z" fill="#ffffff"/></svg>
<svg class="s" style="left:1129px;top:1146px;" width="17" height="18" viewBox="0 0 17 18"><g fill="#b0dcf8" stroke="#2a5a90" stroke-width="0.6"><path id="bl" d="M8.5 10C3.5 8 5 3 8.5 0.5C12 3 13.5 8 8.5 10Z"/><path d="M8.5 10C3.5 8 5 3 8.5 0.5C12 3 13.5 8 8.5 10Z" transform="rotate(125 8.5 10)"/><path d="M8.5 10C3.5 8 5 3 8.5 0.5C12 3 13.5 8 8.5 10Z" transform="rotate(-125 8.5 10)"/></g></svg>
<div class="t" style="left:1148px;top:1149px;font-size:12px;color:#c8cdd3;font-family:'Liberation Serif',serif;">1:1</div>
<svg class="s" style="left:1169.5px;top:1150.5px;" width="9" height="5" viewBox="0 0 9 5"><path d="M0 0H9L4.5 5Z" fill="#ffffff"/></svg>
<svg class="s" style="left:1186px;top:1146px;" width="17" height="18" viewBox="0 0 17 18"><g fill="#b0dcf8" stroke="#2a5a90" stroke-width="0.6"><path id="bl" d="M8.5 10C3.5 8 5 3 8.5 0.5C12 3 13.5 8 8.5 10Z"/><path d="M8.5 10C3.5 8 5 3 8.5 0.5C12 3 13.5 8 8.5 10Z" transform="rotate(125 8.5 10)"/><path d="M8.5 10C3.5 8 5 3 8.5 0.5C12 3 13.5 8 8.5 10Z" transform="rotate(-125 8.5 10)"/></g><circle cx="13.5" cy="13" r="2.6" fill="#f0c040"/><rect x="12" y="15.5" width="3" height="1.3" fill="#f0c040"/></svg>
<svg class="s" style="left:1209px;top:1146px;" width="17" height="18" viewBox="0 0 17 18"><g fill="#b0dcf8" stroke="#2a5a90" stroke-width="0.6"><path id="bl" d="M8.5 10C3.5 8 5 3 8.5 0.5C12 3 13.5 8 8.5 10Z"/><path d="M8.5 10C3.5 8 5 3 8.5 0.5C12 3 13.5 8 8.5 10Z" transform="rotate(125 8.5 10)"/><path d="M8.5 10C3.5 8 5 3 8.5 0.5C12 3 13.5 8 8.5 10Z" transform="rotate(-125 8.5 10)"/></g><path d="M5 1L2.5 4.5H5.5L3 8" stroke="#b8c0c8" stroke-width="1.2" fill="none"/></svg>
<svg class="s" style="left:1230px;top:1147px;" width="18" height="18" viewBox="0 0 18 18"><rect x="1" y="6" width="7" height="7" stroke="#fff" stroke-width="1.2" fill="none"/><circle cx="12" cy="6" r="4" stroke="#fff" stroke-width="1.2" fill="none"/><path d="M10 10L13 13L10 16L7 13Z" stroke="#fff" stroke-width="1" fill="none"/></svg>
<svg class="s" style="left:1251px;top:1147px;" width="18" height="18" viewBox="0 0 18 18"><circle cx="9" cy="9" r="5" stroke="#4fa6e8" stroke-width="3" fill="none"/><g stroke="#4fa6e8" stroke-width="2.2"><path d="M9 1V4M9 14V17M1 9H4M14 9H17M3.3 3.3L5.4 5.4M12.6 12.6L14.7 14.7M3.3 14.7L5.4 12.6M12.6 5.4L14.7 3.3"/></g></svg>
<svg class="s" style="left:1274px;top:1147px;" width="18" height="18" viewBox="0 0 18 18"><path d="M2 6V2H6M12 2H16V6M16 12V16H12M6 16H2V12M2 2L7 7M16 2L11 7M16 16L11 11M2 16L7 11" stroke="#fff" stroke-width="1.2" fill="none"/></svg>
<svg class="s" style="left:1297px;top:1147px;" width="18" height="18" viewBox="0 0 18 18"><path d="M1 3H16M1 9H16M1 15H16" stroke="#4fa6e8" stroke-width="2"/></svg>
<svg class="s" style="left:1320px;top:1156px;" width="11" height="12" viewBox="0 0 11 12"><path d="M11 2L2 11M11 6L6 11M11 10L10 11" stroke="#7c8590" stroke-width="1"/></svg>
</body></html>
